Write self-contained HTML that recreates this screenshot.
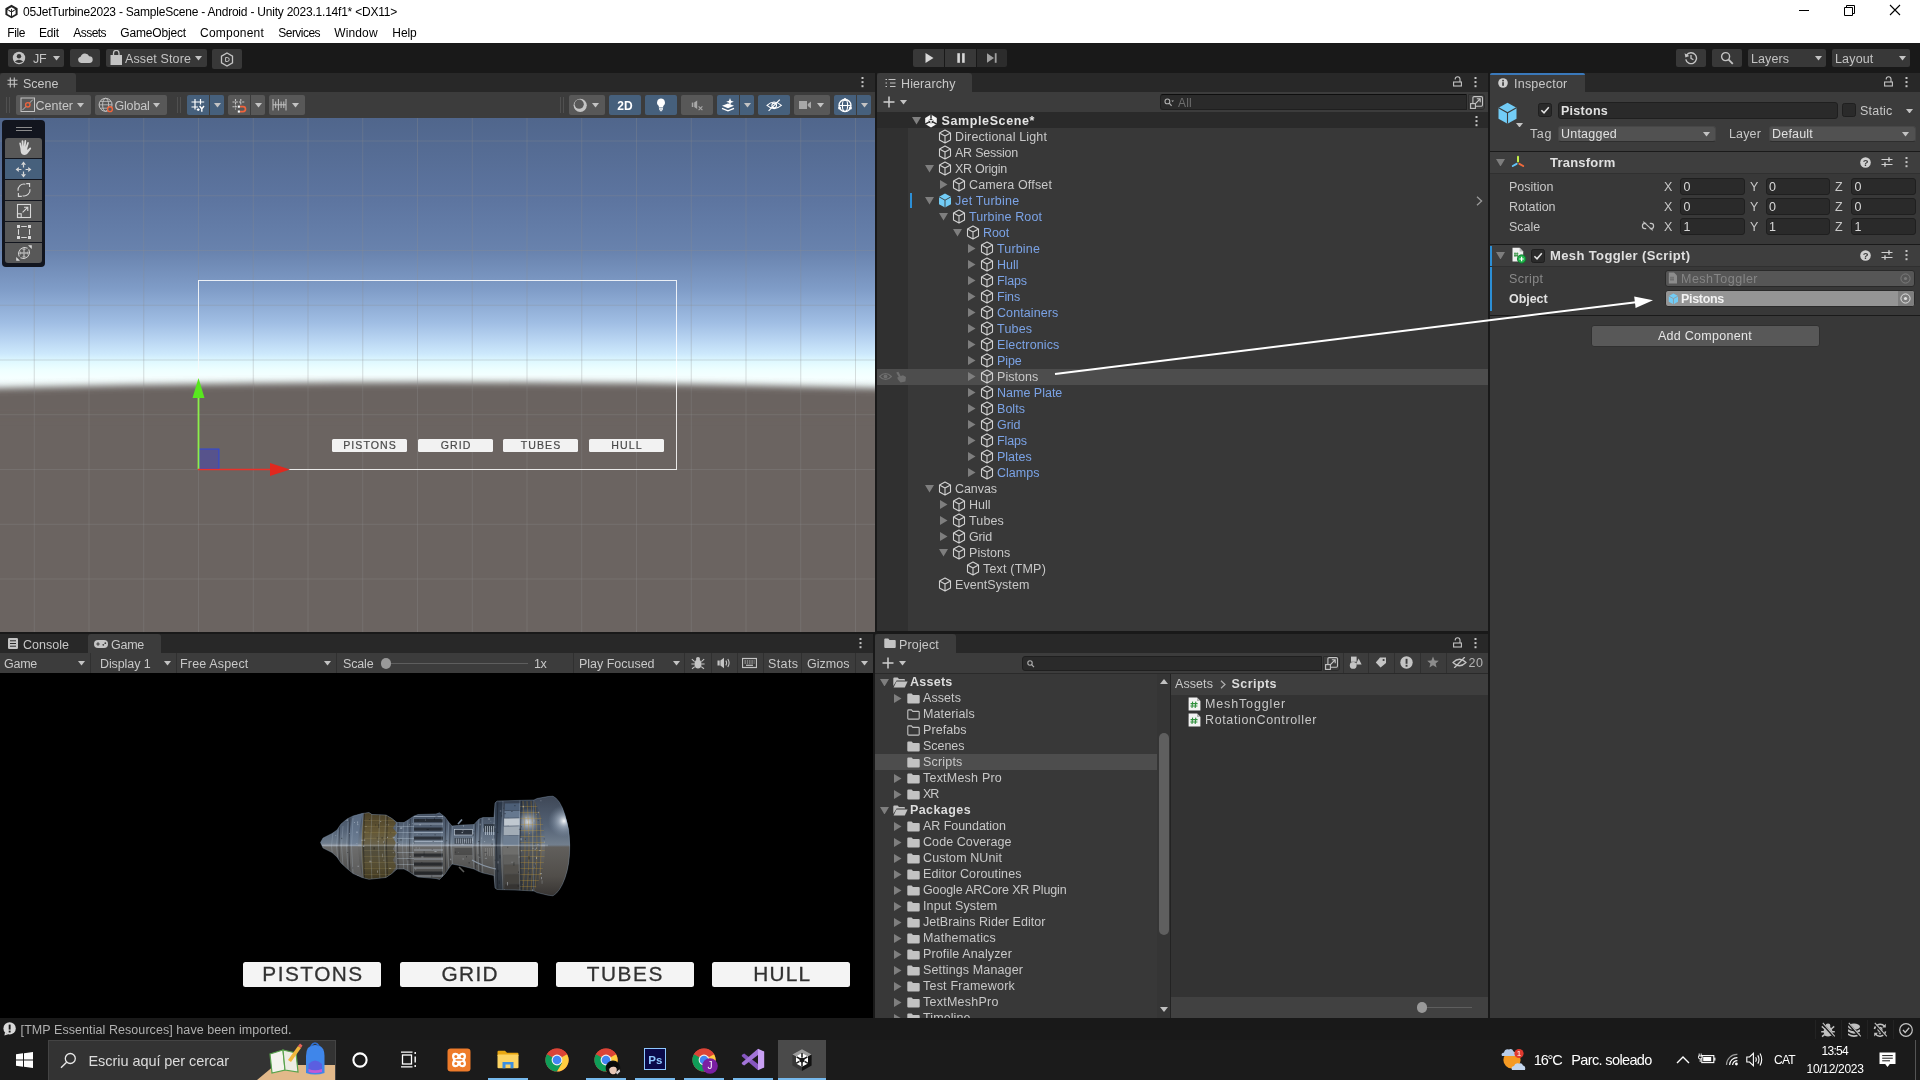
<!DOCTYPE html>
<html><head><meta charset="utf-8"><title>Unity Editor</title>
<style>
html,body{margin:0;padding:0;width:1920px;height:1080px;overflow:hidden;background:#383838;}
body{font-family:"Liberation Sans",sans-serif;position:relative;}
.r{position:absolute;display:block;box-sizing:border-box;}
.t{position:absolute;white-space:nowrap;line-height:16px;height:16px;}
</style></head><body>
<div id="root" style="position:absolute;left:0;top:0;width:1920px;height:1080px;will-change:transform;">

<div class="r" style="left:0px;top:0px;width:1920px;height:43px;background:#ffffff;"></div>
<svg class="r" style="left:4px;top:4px;" width="15" height="15" viewBox="0 0 15 15"><path d="M7.5 0.8 L13.6 4.2 V10.8 L7.5 14.2 L1.4 10.8 V4.2 Z" fill="#222"/><path d="M7.5 3.2 L11.2 5.3 L7.5 7.4 L3.8 5.3 Z M3.4 6 L7 8.1 V12 L3.4 10 Z M11.6 6 L8 8.1 V12 L11.6 10 Z" fill="#fff"/><path d="M7.5 5 V9.5 M5 6.5 L7.5 8 L10 6.5" stroke="#222" stroke-width="0.9" fill="none"/></svg>
<div class="t" style="left:23.00px;top:4.20px;font-size:12px;color:#000;letter-spacing:-0.219px;">05JetTurbine2023 - SampleScene - Android - Unity 2023.1.14f1* &lt;DX11&gt;</div>
<div class="t" style="left:7.30px;top:24.90px;font-size:12px;color:#000;letter-spacing:-0.409px;">File</div>
<div class="t" style="left:39.00px;top:24.90px;font-size:12px;color:#000;letter-spacing:-0.169px;">Edit</div>
<div class="t" style="left:73.30px;top:24.90px;font-size:12px;color:#000;letter-spacing:-0.552px;">Assets</div>
<div class="t" style="left:120.30px;top:24.90px;font-size:12px;color:#000;letter-spacing:-0.166px;">GameObject</div>
<div class="t" style="left:200.00px;top:24.90px;font-size:12px;color:#000;letter-spacing:0.218px;">Component</div>
<div class="t" style="left:278.30px;top:24.90px;font-size:12px;color:#000;letter-spacing:-0.539px;">Services</div>
<div class="t" style="left:334.30px;top:24.90px;font-size:12px;color:#000;letter-spacing:0.120px;">Window</div>
<div class="t" style="left:392.30px;top:24.90px;font-size:12px;color:#000;letter-spacing:-0.070px;">Help</div>
<svg class="r" style="left:1797px;top:4px;" width="110" height="14" viewBox="0 0 110 14"><path d="M2 6.5 H12" stroke="#000" stroke-width="1"/><path d="M47.5 3.5 H55.5 V11.5 H47.5 Z M49.5 3.5 V1.5 H57.5 V9.5 H55.5" stroke="#000" stroke-width="1" fill="none"/><path d="M93 1 L103 11 M103 1 L93 11" stroke="#000" stroke-width="1.1"/></svg>
<div class="r" style="left:0px;top:43px;width:1920px;height:30px;background:#191919;"></div>
<div class="r" style="left:8px;top:49px;width:56px;height:18px;background:#383838;border-radius:2px;"></div>
<div class="r" style="left:70px;top:49px;width:30px;height:18px;background:#383838;border-radius:2px;"></div>
<div class="r" style="left:106px;top:49px;width:101px;height:18px;background:#383838;border-radius:2px;"></div>
<div class="r" style="left:212px;top:49px;width:30px;height:20px;background:#383838;border-radius:2px;"></div>
<svg class="r" style="left:12px;top:51px;" width="14" height="14" viewBox="0 0 14 14"><circle cx="7" cy="7" r="6.2" fill="#c4c4c4"/><circle cx="7" cy="5.3" r="2.2" fill="#383838"/><path d="M2.8 10.6 Q7 6.8 11.2 10.6 Q7 13.5 2.8 10.6Z" fill="#383838"/></svg>
<div class="t" style="left:33.00px;top:50.70px;font-size:12.5px;color:#c4c4c4;letter-spacing:-0.192px;">JF</div>
<svg class="r" style="left:53px;top:56px;" width="7" height="4.5" viewBox="0 0 7 4.5"><path d="M0 0 H7 L3.5 4.5 Z" fill="#c4c4c4"/></svg>
<svg class="r" style="left:77px;top:52px;" width="16" height="12" viewBox="0 0 16 12"><path d="M4 11 A3.2 3.2 0 0 1 3.6 4.7 A4.6 4.6 0 0 1 12.2 4.2 A3.4 3.4 0 0 1 12.4 11 Z" fill="#c4c4c4"/></svg>
<svg class="r" style="left:110px;top:50px;" width="13" height="16" viewBox="0 0 13 16"><rect x="0.5" y="5" width="11.5" height="10" fill="#c4c4c4"/><path d="M3.5 5 V3.2 A2.7 2.7 0 0 1 9 3.2 V5" fill="none" stroke="#c4c4c4" stroke-width="1.3"/></svg>
<div class="t" style="left:125.00px;top:50.70px;font-size:12.5px;color:#c4c4c4;letter-spacing:0.126px;">Asset Store</div>
<svg class="r" style="left:194.5px;top:56px;" width="7" height="4.5" viewBox="0 0 7 4.5"><path d="M0 0 H7 L3.5 4.5 Z" fill="#c4c4c4"/></svg>
<svg class="r" style="left:220px;top:52px;" width="14" height="15" viewBox="0 0 14 15"><path d="M7 1 L12.5 4.2 V10.8 L7 14 L1.5 10.8 V4.2 Z" fill="none" stroke="#c4c4c4" stroke-width="1.3"/><path d="M5.6 5.5 H7.2 A2 2 0 0 1 7.2 9.5 H5.6 Z" fill="none" stroke="#c4c4c4" stroke-width="1"/></svg>
<div class="r" style="left:913px;top:49px;width:30.5px;height:18px;background:#383838;border-radius:2px 0 0 2px;"></div>
<div class="r" style="left:945px;top:49px;width:30.5px;height:18px;background:#383838;"></div>
<div class="r" style="left:977px;top:49px;width:29.5px;height:18px;background:#2c2c2c;border-radius:0 2px 2px 0;"></div>
<svg class="r" style="left:923px;top:52px;" width="12" height="12" viewBox="0 0 12 12"><path d="M2.5 1 L10.5 6 L2.5 11 Z" fill="#d8d8d8"/></svg>
<svg class="r" style="left:955px;top:52px;" width="12" height="12" viewBox="0 0 12 12"><rect x="2.3" y="1.2" width="2.6" height="9.6" fill="#d8d8d8"/><rect x="7.1" y="1.2" width="2.6" height="9.6" fill="#d8d8d8"/></svg>
<svg class="r" style="left:986px;top:52px;" width="12" height="12" viewBox="0 0 12 12"><path d="M1 1.2 L8 6 L1 10.8 Z" fill="#a0a0a0"/><rect x="8.8" y="1.2" width="1.8" height="9.6" fill="#a0a0a0"/></svg>
<div class="r" style="left:1676px;top:49px;width:29.5px;height:18px;background:#383838;border-radius:2px;"></div>
<div class="r" style="left:1712px;top:49px;width:29.5px;height:18px;background:#383838;border-radius:2px;"></div>
<div class="r" style="left:1748px;top:49px;width:77.5px;height:18px;background:#383838;border-radius:2px;"></div>
<div class="r" style="left:1832px;top:49px;width:77.5px;height:18px;background:#383838;border-radius:2px;"></div>
<svg class="r" style="left:1684px;top:51px;" width="14" height="14" viewBox="0 0 14 14"><path d="M2.6 4.2 A5.4 5.4 0 1 1 1.8 8.3" fill="none" stroke="#c4c4c4" stroke-width="1.4"/><path d="M0.6 2.2 L1.4 6.4 L5.4 5 Z" fill="#c4c4c4"/><path d="M7 4 V7.4 L9.4 8.8" fill="none" stroke="#c4c4c4" stroke-width="1.3"/></svg>
<svg class="r" style="left:1720px;top:51px;" width="14" height="14" viewBox="0 0 14 14"><circle cx="5.6" cy="5.6" r="4" fill="none" stroke="#c4c4c4" stroke-width="1.4"/><path d="M8.6 8.6 L12.8 12.8" stroke="#c4c4c4" stroke-width="1.8"/></svg>
<div class="t" style="left:1751.00px;top:50.70px;font-size:12.5px;color:#c4c4c4;letter-spacing:0.081px;">Layers</div>
<svg class="r" style="left:1815px;top:56px;" width="7" height="4.5" viewBox="0 0 7 4.5"><path d="M0 0 H7 L3.5 4.5 Z" fill="#c4c4c4"/></svg>
<div class="t" style="left:1835.00px;top:50.70px;font-size:12.5px;color:#c4c4c4;letter-spacing:0.162px;">Layout</div>
<svg class="r" style="left:1899px;top:56px;" width="7" height="4.5" viewBox="0 0 7 4.5"><path d="M0 0 H7 L3.5 4.5 Z" fill="#c4c4c4"/></svg>
<div class="r" style="left:0px;top:73px;width:1920px;height:945px;background:#191919;"></div>
<div class="r" style="left:0px;top:73px;width:875px;height:19px;background:#282828;"></div>
<div class="r" style="left:0px;top:73px;width:76px;height:19px;background:#3c3c3c;border-radius:3px 3px 0 0;"></div>
<svg class="r" style="left:7px;top:77px;" width="11" height="11" viewBox="0 0 11 11"><path d="M3.3 0.5 V10.5 M7.3 0.5 V10.5 M0.5 3.3 H10.5 M0.5 7.3 H10.5" stroke="#c4c4c4" stroke-width="1.1" fill="none"/></svg>
<div class="t" style="left:23.00px;top:75.70px;font-size:12.5px;color:#c8c8c8;letter-spacing:0.012px;">Scene</div>
<svg class="r" style="left:860.5px;top:76.8px;" width="3" height="11" viewBox="0 0 3 11"><rect x="0.5" y="0" width="2" height="2" fill="#c4c4c4"/><rect x="0.5" y="4.1" width="2" height="2" fill="#c4c4c4"/><rect x="0.5" y="8.2" width="2" height="2" fill="#c4c4c4"/></svg>
<div class="r" style="left:0px;top:92px;width:875px;height:26px;background:#3c3c3c;"></div>
<div class="r" style="left:6px;top:97px;width:1px;height:16px;background:#505050;"></div>
<div class="r" style="left:9px;top:97px;width:1px;height:16px;background:#505050;"></div>
<div class="r" style="left:177px;top:97px;width:1px;height:16px;background:#505050;"></div>
<div class="r" style="left:180px;top:97px;width:1px;height:16px;background:#505050;"></div>
<div class="r" style="left:559.5px;top:97px;width:1px;height:16px;background:#505050;"></div>
<div class="r" style="left:562.5px;top:97px;width:1px;height:16px;background:#505050;"></div>
<div class="r" style="left:16px;top:95px;width:75px;height:20px;background:#585858;border-radius:2px;"></div>
<div class="r" style="left:95px;top:95px;width:72px;height:20px;background:#585858;border-radius:2px;"></div>
<svg class="r" style="left:19.5px;top:97px;" width="16" height="16" viewBox="0 0 16 16"><rect x="1" y="1" width="13.5" height="13.5" fill="none" stroke="#c4c4c4" stroke-width="1"/><path d="M2.5 13 L13 2.5" stroke="#c4c4c4" stroke-width="0.9"/><circle cx="7.8" cy="7.8" r="2.2" fill="#585858" stroke="#f0643c" stroke-width="1.3"/></svg>
<div class="t" style="left:35.50px;top:97.70px;font-size:12.5px;color:#c8c8c8;letter-spacing:-0.003px;">Center</div>
<svg class="r" style="left:77px;top:103px;" width="7" height="4.5" viewBox="0 0 7 4.5"><path d="M0 0 H7 L3.5 4.5 Z" fill="#c4c4c4"/></svg>
<svg class="r" style="left:98px;top:97px;" width="16" height="16" viewBox="0 0 16 16"><circle cx="7.6" cy="7.8" r="6.5" fill="none" stroke="#c4c4c4" stroke-width="1"/><ellipse cx="7.6" cy="7.8" rx="3" ry="6.5" fill="none" stroke="#c4c4c4" stroke-width="0.9"/><path d="M1.1 7.8 H14.1 M2.2 4.4 H13 M2.2 11.2 H13" stroke="#c4c4c4" stroke-width="0.8"/><circle cx="12" cy="12.2" r="2.4" fill="#585858" stroke="#f0643c" stroke-width="1.4"/></svg>
<div class="t" style="left:114.50px;top:97.70px;font-size:12.5px;color:#c8c8c8;letter-spacing:-0.188px;">Global</div>
<svg class="r" style="left:153px;top:103px;" width="7" height="4.5" viewBox="0 0 7 4.5"><path d="M0 0 H7 L3.5 4.5 Z" fill="#c4c4c4"/></svg>
<div class="r" style="left:187px;top:95px;width:22px;height:20px;background:#46607c;border-radius:2px 0 0 2px;"></div>
<div class="r" style="left:210px;top:95px;width:14px;height:20px;background:#46607c;border-radius:0 2px 2px 0;"></div>
<svg class="r" style="left:191px;top:98px;" width="14" height="15" viewBox="0 0 14 15"><path d="M4 1 V11.5 M9.5 1 V6.5 M0.5 4 H13.2 M0.5 9 H7 M5.8 11.6 H8.6 M7.2 10.2 V13" stroke="#fff" stroke-width="1.2" fill="none"/><path d="M8.6 8 L10.8 10.8 L13 8 M10.8 10.8 V13.8" stroke="#fff" stroke-width="1.4" fill="none"/></svg>
<svg class="r" style="left:213.5px;top:103px;" width="7" height="4.5" viewBox="0 0 7 4.5"><path d="M0 0 H7 L3.5 4.5 Z" fill="#c4c4c4"/></svg>
<div class="r" style="left:228px;top:95px;width:22px;height:20px;background:#585858;border-radius:2px 0 0 2px;"></div>
<div class="r" style="left:251px;top:95px;width:14px;height:20px;background:#585858;border-radius:0 2px 2px 0;"></div>
<svg class="r" style="left:232px;top:98px;" width="15" height="15" viewBox="0 0 15 15"><path d="M3.5 1 V11.5 M8.8 1 V6.5 M0.5 4 H12.5 M0.5 8.7 H5" stroke="#c4c4c4" stroke-width="1.1" fill="none" stroke-dasharray="2.2 1"/><path d="M8 8.6 H11 A2.5 2.5 0 0 1 11 13.6 H8" stroke="#f0643c" stroke-width="1.7" fill="none"/><rect x="5.8" y="7.6" width="2.1" height="2.1" fill="#fff"/><rect x="5.8" y="12.5" width="2.1" height="2.1" fill="#fff"/></svg>
<svg class="r" style="left:254.5px;top:103px;" width="7" height="4.5" viewBox="0 0 7 4.5"><path d="M0 0 H7 L3.5 4.5 Z" fill="#c4c4c4"/></svg>
<div class="r" style="left:269px;top:95px;width:36px;height:20px;background:#585858;border-radius:2px;"></div>
<svg class="r" style="left:272px;top:98px;" width="15" height="14" viewBox="0 0 15 14"><path d="M1 1 V12.5 M3.7 3.5 V10 M6.4 1 V12.5 M9.1 3.5 V10 M11.8 3.5 V10 M14 1 V12.5 M1 6.8 H14" stroke="#c4c4c4" stroke-width="1" fill="none"/></svg>
<svg class="r" style="left:291.5px;top:103px;" width="7" height="4.5" viewBox="0 0 7 4.5"><path d="M0 0 H7 L3.5 4.5 Z" fill="#c4c4c4"/></svg>
<div class="r" style="left:569px;top:95px;width:36px;height:20px;background:#585858;border-radius:2px;"></div>
<svg class="r" style="left:573px;top:98px;" width="15" height="15" viewBox="0 0 15 15"><circle cx="7.2" cy="7.3" r="6.6" fill="#c4c4c4"/><circle cx="6.2" cy="6.2" r="4.6" fill="#585858"/></svg>
<svg class="r" style="left:591.5px;top:103px;" width="7" height="4.5" viewBox="0 0 7 4.5"><path d="M0 0 H7 L3.5 4.5 Z" fill="#c4c4c4"/></svg>
<div class="r" style="left:609px;top:95px;width:32px;height:20px;background:#46607c;border-radius:2px;"></div>
<div class="t" style="left:475.00px;width:300px;text-align:center;top:97.70px;font-size:12px;color:#fff;letter-spacing:0.000px;font-weight:bold;">2D</div>
<div class="r" style="left:645px;top:95px;width:32px;height:20px;background:#46607c;border-radius:2px;"></div>
<svg class="r" style="left:655px;top:97px;" width="12" height="16" viewBox="0 0 12 16"><path d="M6 1.6 A4 4 0 0 1 8.2 8.9 V10.4 H3.8 V8.9 A4 4 0 0 1 6 1.6 Z" fill="#fff"/><rect x="4" y="11.2" width="4" height="1.5" fill="#fff"/><rect x="4.8" y="13.2" width="2.4" height="1" fill="#fff"/></svg>
<div class="r" style="left:681px;top:95px;width:32px;height:20px;background:#585858;border-radius:2px;"></div>
<svg class="r" style="left:690px;top:99px;" width="15" height="13" viewBox="0 0 15 13"><rect x="1.8" y="3.6" width="1.5" height="4.4" fill="#a8a8a8"/><path d="M4.2 3.6 L7.2 1.6 V10 L4.2 8 Z" fill="#a8a8a8"/><path d="M8.6 7.4 L12.4 11.2 M12.4 7.4 L8.6 11.2" stroke="#a8a8a8" stroke-width="1.1"/></svg>
<div class="r" style="left:717px;top:95px;width:22px;height:20px;background:#46607c;border-radius:2px 0 0 2px;"></div>
<div class="r" style="left:740px;top:95px;width:14px;height:20px;background:#46607c;border-radius:0 2px 2px 0;"></div>
<svg class="r" style="left:720px;top:97px;" width="16" height="16" viewBox="0 0 16 16"><path d="M2 8.8 L8 6.4 L14 8.8 L8 11.2 Z" fill="#fff"/><path d="M2 11.4 L8 13.8 L14 11.4" fill="none" stroke="#fff" stroke-width="1.4"/><path d="M10 1 L11 3.8 L13.8 4.8 L11 5.8 L10 8.6 L9 5.8 L6.2 4.8 L9 3.8 Z" fill="#fff"/></svg>
<svg class="r" style="left:743.5px;top:103px;" width="7" height="4.5" viewBox="0 0 7 4.5"><path d="M0 0 H7 L3.5 4.5 Z" fill="#c4c4c4"/></svg>
<div class="r" style="left:758px;top:95px;width:32px;height:20px;background:#46607c;border-radius:2px;"></div>
<svg class="r" style="left:765px;top:98px;" width="18" height="14" viewBox="0 0 18 14"><path d="M2 7.4 Q9 0.6 16.4 7.4 Q9 13.8 2 7.4 Z" fill="none" stroke="#fff" stroke-width="1.1"/><circle cx="9.2" cy="7.4" r="2.3" fill="none" stroke="#fff" stroke-width="1.1"/><path d="M3.6 12.8 L14.8 1.6" stroke="#fff" stroke-width="1.2"/></svg>
<div class="r" style="left:794px;top:95px;width:36px;height:20px;background:#585858;border-radius:2px;"></div>
<svg class="r" style="left:799px;top:100px;" width="13" height="10" viewBox="0 0 13 10"><rect x="0" y="1" width="8" height="8" fill="#a8a8a8"/><path d="M8.8 4 L12 1.5 V8.5 L8.8 6 Z" fill="#a8a8a8"/></svg>
<svg class="r" style="left:816.5px;top:103px;" width="7" height="4.5" viewBox="0 0 7 4.5"><path d="M0 0 H7 L3.5 4.5 Z" fill="#c4c4c4"/></svg>
<div class="r" style="left:834px;top:95px;width:22px;height:20px;background:#46607c;border-radius:2px 0 0 2px;"></div>
<div class="r" style="left:857px;top:95px;width:14px;height:20px;background:#46607c;border-radius:0 2px 2px 0;"></div>
<svg class="r" style="left:837px;top:97px;" width="16" height="16" viewBox="0 0 16 16"><circle cx="8" cy="8.5" r="6" fill="none" stroke="#fff" stroke-width="1.3"/><ellipse cx="8" cy="8.5" rx="2.6" ry="6" fill="none" stroke="#fff" stroke-width="1.1"/><path d="M2 8.5 H14" stroke="#fff" stroke-width="1.1"/><circle cx="8" cy="2.5" r="1.5" fill="#fff"/><circle cx="2.6" cy="11" r="1.5" fill="#fff"/><circle cx="13.4" cy="11" r="1.5" fill="#fff"/></svg>
<svg class="r" style="left:860.5px;top:103px;" width="7" height="4.5" viewBox="0 0 7 4.5"><path d="M0 0 H7 L3.5 4.5 Z" fill="#c4c4c4"/></svg>
<svg class="r" style="left:0;top:118px" width="875" height="514" viewBox="0 0 875 514">
<defs><linearGradient id="sky" x1="0" y1="0" x2="0" y2="1">
<stop offset="0.0000" stop-color="#50668c"/>
<stop offset="0.2929" stop-color="#5d75a0"/>
<stop offset="0.4714" stop-color="#6882ad"/>
<stop offset="0.6143" stop-color="#809dc8"/>
<stop offset="0.7321" stop-color="#a0bee4"/>
<stop offset="0.7929" stop-color="#b9d5f2"/>
<stop offset="0.8429" stop-color="#cde9fc"/>
<stop offset="0.8679" stop-color="#def8ff"/>
<stop offset="0.9000" stop-color="#eeffff"/>
<stop offset="0.9250" stop-color="#f5ffff"/>
<stop offset="1.0000" stop-color="#f0fafa"/>
</linearGradient>
<filter id="bl" x="-5%" y="-20%" width="110%" height="140%"><feGaussianBlur stdDeviation="3.8"/></filter></defs>
<rect x="0" y="0" width="875" height="280" fill="url(#sky)"/>
<rect x="0" y="280" width="875" height="234" fill="#6b6461"/>
<path d="M-20 270.5 Q437 258 895 270.5 V300 H-20 Z" fill="#6b6461" filter="url(#bl)"/>
<rect x="33.75" y="0" width="1" height="514" fill="#909090" fill-opacity="0.3"/><rect x="88.50" y="0" width="1" height="514" fill="#909090" fill-opacity="0.3"/><rect x="143.25" y="0" width="1" height="514" fill="#909090" fill-opacity="0.3"/><rect x="198.00" y="0" width="1" height="514" fill="#909090" fill-opacity="0.3"/><rect x="252.75" y="0" width="1" height="514" fill="#909090" fill-opacity="0.3"/><rect x="307.50" y="0" width="1" height="514" fill="#909090" fill-opacity="0.3"/><rect x="362.25" y="0" width="1" height="514" fill="#909090" fill-opacity="0.3"/><rect x="417.00" y="0" width="1" height="514" fill="#909090" fill-opacity="0.3"/><rect x="471.75" y="0" width="1" height="514" fill="#909090" fill-opacity="0.3"/><rect x="526.50" y="0" width="1" height="514" fill="#909090" fill-opacity="0.3"/><rect x="581.25" y="0" width="1" height="514" fill="#909090" fill-opacity="0.3"/><rect x="636.00" y="0" width="1" height="514" fill="#909090" fill-opacity="0.3"/><rect x="690.75" y="0" width="1" height="514" fill="#909090" fill-opacity="0.3"/><rect x="745.50" y="0" width="1" height="514" fill="#909090" fill-opacity="0.3"/><rect x="800.25" y="0" width="1" height="514" fill="#909090" fill-opacity="0.3"/><rect x="855.00" y="0" width="1" height="514" fill="#909090" fill-opacity="0.3"/><rect x="0" y="460.50" width="875" height="1" fill="#909090" fill-opacity="0.3"/><rect x="0" y="405.75" width="875" height="1" fill="#909090" fill-opacity="0.3"/><rect x="0" y="351.00" width="875" height="1" fill="#909090" fill-opacity="0.3"/><rect x="0" y="296.25" width="875" height="1" fill="#909090" fill-opacity="0.3"/><rect x="0" y="241.50" width="875" height="1" fill="#909090" fill-opacity="0.3"/><rect x="0" y="186.75" width="875" height="1" fill="#909090" fill-opacity="0.3"/><rect x="0" y="132.00" width="875" height="1" fill="#909090" fill-opacity="0.3"/><rect x="0" y="77.25" width="875" height="1" fill="#909090" fill-opacity="0.3"/><rect x="0" y="22.50" width="875" height="1" fill="#909090" fill-opacity="0.3"/>
<rect x="198.5" y="162.5" width="478" height="189" fill="none" stroke="#ffffff" stroke-opacity="0.85" stroke-width="1"/>
<rect x="199" y="331" width="20" height="20" fill="#3c3cc8" fill-opacity="0.42" stroke="#2846e6" stroke-width="0.9"/>
<path d="M198.5 351 V278" stroke="#8cf04a" stroke-width="1.8"/>
<path d="M198.5 260 L204.5 280 H192.5 Z" fill="#58e81e"/>
<path d="M198 351.5 H272" stroke="#e8322a" stroke-width="1.6"/>
<path d="M290 351.5 L270 345 V358 Z" fill="#e0281e"/>
</svg>
<div class="r" style="left:332px;top:439px;width:75px;height:13.2px;background:#f2f2f2;border-radius:1.5px;"></div>
<div class="t" style="left:220.00px;width:300px;text-align:center;top:436.90px;font-size:10.6px;color:#4a4a4a;letter-spacing:1.050px;-webkit-text-stroke:0.2px #4a4a4a;">PISTONS</div>
<div class="r" style="left:418px;top:439px;width:75px;height:13.2px;background:#f2f2f2;border-radius:1.5px;"></div>
<div class="t" style="left:306.00px;width:300px;text-align:center;top:436.90px;font-size:10.6px;color:#4a4a4a;letter-spacing:1.050px;-webkit-text-stroke:0.2px #4a4a4a;">GRID</div>
<div class="r" style="left:503px;top:439px;width:75px;height:13.2px;background:#f2f2f2;border-radius:1.5px;"></div>
<div class="t" style="left:391.00px;width:300px;text-align:center;top:436.90px;font-size:10.6px;color:#4a4a4a;letter-spacing:1.050px;-webkit-text-stroke:0.2px #4a4a4a;">TUBES</div>
<div class="r" style="left:589px;top:439px;width:75px;height:13.2px;background:#f2f2f2;border-radius:1.5px;"></div>
<div class="t" style="left:477.00px;width:300px;text-align:center;top:436.90px;font-size:10.6px;color:#4a4a4a;letter-spacing:1.050px;-webkit-text-stroke:0.2px #4a4a4a;">HULL</div>
<div class="r" style="left:2px;top:120px;width:43px;height:147px;background:#12151e;border-radius:4px;"></div>
<div class="r" style="left:16px;top:127px;width:16px;height:1px;background:#8c8c8c;"></div>
<div class="r" style="left:16px;top:130px;width:16px;height:1px;background:#8c8c8c;"></div>
<div class="r" style="left:5px;top:138px;width:37px;height:20px;background:#585858;border-radius:3px 3px 0 0;"></div>
<div class="r" style="left:5px;top:159px;width:37px;height:20px;background:#46607c;border-radius:0;"></div>
<div class="r" style="left:5px;top:180px;width:37px;height:20px;background:#585858;border-radius:0;"></div>
<div class="r" style="left:5px;top:201px;width:37px;height:20px;background:#585858;border-radius:0;"></div>
<div class="r" style="left:5px;top:222px;width:37px;height:20px;background:#585858;border-radius:0;"></div>
<div class="r" style="left:5px;top:243px;width:37px;height:20px;background:#585858;border-radius:0 0 3px 3px;"></div>
<svg class="r" style="left:16px;top:139px;" width="16" height="17" viewBox="0 0 16 17"><path d="M4.4 9.6 L3.3 4.6 Q3.2 3.6 4 3.5 Q4.8 3.4 5 4.4 L5.9 8 L5.6 2.2 Q5.6 1.2 6.5 1.2 Q7.3 1.2 7.4 2.2 L7.7 7.6 L8.5 1.9 Q8.7 0.9 9.5 1 Q10.3 1.2 10.2 2.2 L9.6 7.9 L11.2 3.6 Q11.6 2.7 12.3 3 Q13 3.3 12.8 4.3 L11.3 9.6 L11.4 11 L13.6 8.8 Q14.4 8.2 15 8.8 Q15.4 9.4 14.8 10.2 L11.6 14.6 Q10.6 16 8.6 16 Q5.4 16 4.8 13 Z" fill="#d8d8d8"/></svg>
<svg class="r" style="left:15px;top:161px;" width="17" height="17" viewBox="0 0 17 17"><path d="M8.5 3.6 V6.4 M8.5 10.6 V13.4 M3.6 8.5 H6.4 M10.6 8.5 H13.4" stroke="#d8d8d8" stroke-width="1.2"/><path d="M8.5 0.6 L11 3.8 H6 Z M8.5 16.4 L11 13.2 H6 Z M0.6 8.5 L3.8 6 V11 Z M16.4 8.5 L13.2 6 V11 Z" fill="#d8d8d8"/></svg>
<svg class="r" style="left:16px;top:182px;" width="16" height="16" viewBox="0 0 16 16"><path d="M2 8.8 A6 6 0 0 1 9.4 2.2 M14 7.2 A6 6 0 0 1 6.6 13.8" fill="none" stroke="#d8d8d8" stroke-width="1.1"/><path d="M10.2 1.6 H13.6 V5 M5.8 14.4 H2.4 V11" fill="none" stroke="#d8d8d8" stroke-width="1.1"/></svg>
<svg class="r" style="left:16px;top:203px;" width="16" height="16" viewBox="0 0 16 16"><rect x="1.5" y="1.5" width="13" height="13" fill="none" stroke="#d8d8d8" stroke-width="1.1"/><rect x="1.5" y="10.8" width="3.7" height="3.7" fill="none" stroke="#d8d8d8" stroke-width="1.1"/><path d="M6.6 9.4 L11.6 4.4 M8 4.2 H11.8 V8" fill="none" stroke="#d8d8d8" stroke-width="1.1"/></svg>
<svg class="r" style="left:16px;top:224px;" width="16" height="16" viewBox="0 0 16 16"><path d="M5.2 2.5 H10.8 M5.2 13.5 H10.8 M2.5 5.2 V10.8 M13.5 5.2 V10.8" stroke="#d8d8d8" stroke-width="1.1"/><rect x="1" y="1" width="3" height="3" fill="#d8d8d8"/><rect x="12" y="1" width="3" height="3" fill="#d8d8d8"/><rect x="1" y="12" width="3" height="3" fill="#d8d8d8"/><rect x="12" y="12" width="3" height="3" fill="#d8d8d8"/></svg>
<svg class="r" style="left:15px;top:244px;" width="18" height="18" viewBox="0 0 18 18"><path d="M4.2 12.6 A6.2 6.2 0 0 1 12.6 4.2 M13.8 5.4 A6.2 6.2 0 0 1 5.4 13.8" fill="none" stroke="#d8d8d8" stroke-width="1"/><path d="M9 5.8 V12.2 M5.8 9 H12.2" stroke="#b0b0b0" stroke-width="1.4"/><path d="M9 3.6 L10.8 6 H7.2 Z M9 14.4 L10.8 12 H7.2 Z M3.6 9 L6 7.2 V10.8 Z M14.4 9 L12 7.2 V10.8 Z" fill="#b0b0b0"/><path d="M13 1.2 H16.8 V5 Z M5 16.8 H1.2 V13 Z" fill="#d8d8d8"/></svg>
<div class="r" style="left:0px;top:634px;width:873px;height:19px;background:#282828;"></div>
<div class="r" style="left:88px;top:634px;width:73px;height:19px;background:#3c3c3c;border-radius:3px 3px 0 0;"></div>
<svg class="r" style="left:8px;top:638px;" width="10" height="11" viewBox="0 0 10 11"><rect x="0" y="0" width="10" height="11" rx="1.2" fill="#c4c4c4"/><path d="M2 2.8 H8 M2 5.5 H8 M2 8.2 H8" stroke="#282828" stroke-width="1"/></svg>
<div class="t" style="left:23.00px;top:636.70px;font-size:12.5px;color:#c8c8c8;letter-spacing:0.020px;">Console</div>
<svg class="r" style="left:94px;top:640px;" width="14" height="8" viewBox="0 0 14 8"><rect x="0" y="0" width="14" height="8" rx="4" fill="#c4c4c4"/><path d="M2.3 4 H5.7 M4 2.3 V5.7" stroke="#3c3c3c" stroke-width="1.1"/><circle cx="9.3" cy="4.8" r="0.9" fill="#3c3c3c"/><circle cx="11.3" cy="3.2" r="0.9" fill="#3c3c3c"/></svg>
<div class="t" style="left:111.00px;top:636.70px;font-size:12.5px;color:#c8c8c8;letter-spacing:-0.259px;">Game</div>
<svg class="r" style="left:858.5px;top:637.8px;" width="3" height="11" viewBox="0 0 3 11"><rect x="0.5" y="0" width="2" height="2" fill="#c4c4c4"/><rect x="0.5" y="4.1" width="2" height="2" fill="#c4c4c4"/><rect x="0.5" y="8.2" width="2" height="2" fill="#c4c4c4"/></svg>
<div class="r" style="left:0px;top:653px;width:873px;height:20px;background:#3c3c3c;"></div>
<div class="r" style="left:90px;top:653px;width:1px;height:20px;background:#303030;"></div>
<div class="r" style="left:176px;top:653px;width:1px;height:20px;background:#303030;"></div>
<div class="r" style="left:336px;top:653px;width:1px;height:20px;background:#303030;"></div>
<div class="r" style="left:573px;top:653px;width:1px;height:20px;background:#303030;"></div>
<div class="r" style="left:684px;top:653px;width:1px;height:20px;background:#303030;"></div>
<div class="r" style="left:711px;top:653px;width:1px;height:20px;background:#303030;"></div>
<div class="r" style="left:737px;top:653px;width:1px;height:20px;background:#303030;"></div>
<div class="r" style="left:763px;top:653px;width:1px;height:20px;background:#303030;"></div>
<div class="r" style="left:801px;top:653px;width:1px;height:20px;background:#303030;"></div>
<div class="t" style="left:4.00px;top:655.70px;font-size:12.5px;color:#c8c8c8;letter-spacing:-0.259px;">Game</div>
<svg class="r" style="left:78px;top:661px;" width="7" height="4.5" viewBox="0 0 7 4.5"><path d="M0 0 H7 L3.5 4.5 Z" fill="#c4c4c4"/></svg>
<div class="t" style="left:100.00px;top:655.70px;font-size:12.5px;color:#c8c8c8;letter-spacing:-0.101px;">Display 1</div>
<svg class="r" style="left:164px;top:661px;" width="7" height="4.5" viewBox="0 0 7 4.5"><path d="M0 0 H7 L3.5 4.5 Z" fill="#c4c4c4"/></svg>
<div class="t" style="left:180.00px;top:655.70px;font-size:12.5px;color:#c8c8c8;letter-spacing:0.164px;">Free Aspect</div>
<svg class="r" style="left:324px;top:661px;" width="7" height="4.5" viewBox="0 0 7 4.5"><path d="M0 0 H7 L3.5 4.5 Z" fill="#c4c4c4"/></svg>
<div class="t" style="left:343.00px;top:656.20px;font-size:12.5px;color:#c8c8c8;letter-spacing:-0.154px;">Scale</div>
<div class="r" style="left:386px;top:662.5px;width:142px;height:1.5px;background:#5e5e5e;"></div>
<div class="r" style="left:380.5px;top:658px;width:10.5px;height:10.5px;background:#999;border-radius:50%;"></div>
<div class="t" style="left:534.00px;top:656.20px;font-size:12.5px;color:#c8c8c8;letter-spacing:-0.351px;">1x</div>
<div class="t" style="left:579.00px;top:655.70px;font-size:12.5px;color:#c8c8c8;letter-spacing:-0.019px;">Play Focused</div>
<svg class="r" style="left:673px;top:661px;" width="7" height="4.5" viewBox="0 0 7 4.5"><path d="M0 0 H7 L3.5 4.5 Z" fill="#c4c4c4"/></svg>
<svg class="r" style="left:691px;top:656px;" width="14" height="14" viewBox="0 0 14 14"><ellipse cx="7" cy="8" rx="3.6" ry="4.6" fill="#c4c4c4"/><circle cx="7" cy="3" r="2" fill="#c4c4c4"/><path d="M0.8 3.2 L3.6 5.6 M13.2 3.2 L10.4 5.6 M0.4 8 H3.4 M13.6 8 H10.6 M1 12.8 L3.8 10.6 M13 12.8 L10.2 10.6" stroke="#c4c4c4" stroke-width="1.1"/></svg>
<svg class="r" style="left:717px;top:657px;" width="14" height="12" viewBox="0 0 14 12"><rect x="0.5" y="3.5" width="2.2" height="5" fill="#c4c4c4"/><path d="M3.4 3.5 L7 0.8 V11.2 L3.4 8.5 Z" fill="#c4c4c4"/><path d="M8.8 3.6 Q10.4 6 8.8 8.4 M10.8 2 Q13.4 6 10.8 10" fill="none" stroke="#c4c4c4" stroke-width="1.1"/></svg>
<svg class="r" style="left:742px;top:657px;" width="15" height="12" viewBox="0 0 15 12"><rect x="0.5" y="1.5" width="14" height="9" fill="none" stroke="#c4c4c4" stroke-width="1.2"/><path d="M2.5 4 H12.5 M2.5 6 H12.5" stroke="#c4c4c4" stroke-width="1.2" stroke-dasharray="1.4 0.9"/><path d="M4 8.3 H11" stroke="#c4c4c4" stroke-width="1.2"/></svg>
<div class="t" style="left:768.00px;top:655.70px;font-size:12.5px;color:#c8c8c8;letter-spacing:0.403px;">Stats</div>
<div class="t" style="left:807.00px;top:655.70px;font-size:12.5px;color:#c8c8c8;letter-spacing:0.023px;">Gizmos</div>
<div class="r" style="left:855px;top:653px;width:1px;height:20px;background:#303030;"></div>
<svg class="r" style="left:860.5px;top:661px;" width="7" height="4.5" viewBox="0 0 7 4.5"><path d="M0 0 H7 L3.5 4.5 Z" fill="#c4c4c4"/></svg>
<div class="r" style="left:0px;top:673px;width:873px;height:345px;background:#000000;"></div>
<svg class="r" style="left:310px;top:785px" width="270" height="120" viewBox="310 785 270 120">
<defs>
<linearGradient id="tg" gradientUnits="userSpaceOnUse" x1="0" y1="796" x2="0" y2="896">
<stop offset="0" stop-color="#2e3644"/><stop offset="0.15" stop-color="#414d5f"/><stop offset="0.35" stop-color="#576578"/><stop offset="0.47" stop-color="#6e7c8c"/><stop offset="0.495" stop-color="#8b939c"/><stop offset="0.51" stop-color="#6a6a69"/><stop offset="0.7" stop-color="#555554"/><stop offset="0.88" stop-color="#40403f"/><stop offset="1" stop-color="#2c2c2b"/>
</linearGradient>
<linearGradient id="gold" gradientUnits="userSpaceOnUse" x1="0" y1="812" x2="0" y2="880">
<stop offset="0" stop-color="#493c1d"/><stop offset="0.3" stop-color="#67562b"/><stop offset="0.49" stop-color="#665c40"/><stop offset="0.51" stop-color="#4c4837"/><stop offset="0.8" stop-color="#564c2c"/><stop offset="1" stop-color="#3c3318"/>
</linearGradient>
<linearGradient id="flg" gradientUnits="userSpaceOnUse" x1="0" y1="796" x2="0" y2="896">
<stop offset="0" stop-color="#3e4756"/><stop offset="0.3" stop-color="#546275"/><stop offset="0.49" stop-color="#727f8e"/><stop offset="0.51" stop-color="#615f5c"/><stop offset="0.8" stop-color="#514e4a"/><stop offset="1" stop-color="#373432"/>
</linearGradient>
<radialGradient id="hl" gradientUnits="userSpaceOnUse" cx="564" cy="821" r="16"><stop offset="0" stop-color="#ffffff" stop-opacity="0.95"/><stop offset="0.35" stop-color="#c8d4e2" stop-opacity="0.55"/><stop offset="1" stop-color="#8193a8" stop-opacity="0"/></radialGradient>
<radialGradient id="hl2" gradientUnits="userSpaceOnUse" cx="528" cy="822" r="14"><stop offset="0" stop-color="#f4f6f8" stop-opacity="0.85"/><stop offset="1" stop-color="#8193a8" stop-opacity="0"/></radialGradient>
<clipPath id="tc"><path d="M320.5 842.5 L323 838 L332 833.5 L337 830 L341 824 L347 819 L353 816 L362 813.5 L369 812.6 L372 814.5 L386 815 L392 818.5 L397 822.5 L404 822.5 L408 820 L414 816 L418 814.5 L436 814 L439.5 812.8 L445 817 L449 822.5 L452 826 L462 825 L474 824.5 L479 819 L483 817.5 L494 817.5 L495 803 L497 801 L515 800.5 L534 800 L537 798.5 L548 796.5 L553 796.2 Q560 799 565 815 Q570 830 569.7 845 Q570 864 565 878 Q560 892 553 895.8 L548 895.2 L537 892.6 L534 891 L515 890 L497 889.5 L495 888 L494 875.5 L483 873 L479 871.5 L474 869 L462 866 L452 864 L449 868 L445 874 L439.5 879.5 L436 878.5 L418 877 L414 875 L408 871 L404 869 L397 869 L392 873.5 L386 877.5 L372 879 L369 879.3 L362 877.5 L353 873.5 L347 868.5 L341 863 L337 857 L332 852.5 L323 848 Z"/></clipPath>
</defs>
<path d="M320.5 842.5 L323 838 L332 833.5 L337 830 L341 824 L347 819 L353 816 L362 813.5 L369 812.6 L372 814.5 L386 815 L392 818.5 L397 822.5 L404 822.5 L408 820 L414 816 L418 814.5 L436 814 L439.5 812.8 L445 817 L449 822.5 L452 826 L462 825 L474 824.5 L479 819 L483 817.5 L494 817.5 L495 803 L497 801 L515 800.5 L534 800 L537 798.5 L548 796.5 L553 796.2 Q560 799 565 815 Q570 830 569.7 845 Q570 864 565 878 Q560 892 553 895.8 L548 895.2 L537 892.6 L534 891 L515 890 L497 889.5 L495 888 L494 875.5 L483 873 L479 871.5 L474 869 L462 866 L452 864 L449 868 L445 874 L439.5 879.5 L436 878.5 L418 877 L414 875 L408 871 L404 869 L397 869 L392 873.5 L386 877.5 L372 879 L369 879.3 L362 877.5 L353 873.5 L347 868.5 L341 863 L337 857 L332 852.5 L323 848 Z" fill="url(#tg)"/>
<g clip-path="url(#tc)">
<path d="M365 812 L386 814 L392 818 L396 823 L393 828 L397 833 L393 838 L396 843 L393 849 L396 854 L393 860 L396 866 L392 873 L386 878 L364 880 Q359 846 364 812 Z" fill="url(#gold)" fill-opacity="0.85"/>
<path d="M353 814 L363 812 Q358.5 830 358 846 L348.5 846 Q349 830 353 814 Z" fill="#6d829c" fill-opacity="0.5"/>
<path d="M348.5 846 L358 846 Q358.5 862 363 880 L353 876 Q349 862 348.5 846 Z" fill="#707070" fill-opacity="0.45"/>
<rect x="414" y="819" width="29" height="3.2" fill="#15181c" fill-opacity="0.7"/>
<rect x="414" y="827.5" width="29" height="3.2" fill="#15181c" fill-opacity="0.7"/>
<rect x="414" y="836.5" width="29" height="3.2" fill="#15181c" fill-opacity="0.7"/>
<rect x="414" y="853.5" width="29" height="3.2" fill="#15181c" fill-opacity="0.7"/>
<rect x="414" y="862.5" width="29" height="3.2" fill="#15181c" fill-opacity="0.7"/>
<rect x="414" y="871.5" width="29" height="3.2" fill="#15181c" fill-opacity="0.7"/>
<rect x="414" y="816" width="29" height="1" fill="#c4d2e0" fill-opacity="0.55"/>
<rect x="414" y="823.5" width="29" height="1" fill="#c4d2e0" fill-opacity="0.55"/>
<rect x="414" y="832" width="29" height="1" fill="#c4d2e0" fill-opacity="0.55"/>
<rect x="414" y="841" width="29" height="1" fill="#c4d2e0" fill-opacity="0.55"/>
<rect x="414" y="849.5" width="29" height="1" fill="#c4d2e0" fill-opacity="0.55"/>
<rect x="414" y="858.5" width="29" height="1" fill="#c4d2e0" fill-opacity="0.55"/>
<rect x="414" y="867.5" width="29" height="1" fill="#c4d2e0" fill-opacity="0.55"/>
<rect x="414" y="875.5" width="29" height="1" fill="#c4d2e0" fill-opacity="0.55"/>
<rect x="454.5" y="829.5" width="18" height="5.5" fill="#20262e" fill-opacity="0.8" stroke="#c8d4e0" stroke-width="0.6"/>
<rect x="454.5" y="838" width="18" height="6" fill="#2a3038" fill-opacity="0.55"/>
<rect x="456" y="838.5" width="0.8" height="5" fill="#c8d4e0" fill-opacity="0.6"/>
<rect x="458" y="838.5" width="0.8" height="5" fill="#c8d4e0" fill-opacity="0.6"/>
<rect x="460" y="838.5" width="0.8" height="5" fill="#c8d4e0" fill-opacity="0.6"/>
<rect x="462" y="838.5" width="0.8" height="5" fill="#c8d4e0" fill-opacity="0.6"/>
<rect x="464" y="838.5" width="0.8" height="5" fill="#c8d4e0" fill-opacity="0.6"/>
<rect x="466" y="838.5" width="0.8" height="5" fill="#c8d4e0" fill-opacity="0.6"/>
<rect x="468" y="838.5" width="0.8" height="5" fill="#c8d4e0" fill-opacity="0.6"/>
<rect x="470" y="838.5" width="0.8" height="5" fill="#c8d4e0" fill-opacity="0.6"/>
<rect x="472" y="838.5" width="0.8" height="5" fill="#c8d4e0" fill-opacity="0.6"/>
<rect x="454.5" y="848" width="18" height="7" fill="#303030" fill-opacity="0.45"/>
<rect x="484" y="824" width="11" height="8" fill="#1e242c" fill-opacity="0.6"/>
<rect x="485" y="826" width="0.8" height="9" fill="#d8e2ec" fill-opacity="0.7"/>
<rect x="485" y="848" width="0.8" height="8" fill="#b0b0b0" fill-opacity="0.35"/>
<rect x="487" y="826" width="0.8" height="9" fill="#d8e2ec" fill-opacity="0.7"/>
<rect x="487" y="848" width="0.8" height="8" fill="#b0b0b0" fill-opacity="0.35"/>
<rect x="489" y="826" width="0.8" height="9" fill="#d8e2ec" fill-opacity="0.7"/>
<rect x="489" y="848" width="0.8" height="8" fill="#b0b0b0" fill-opacity="0.35"/>
<rect x="491" y="826" width="0.8" height="9" fill="#d8e2ec" fill-opacity="0.7"/>
<rect x="491" y="848" width="0.8" height="8" fill="#b0b0b0" fill-opacity="0.35"/>
<rect x="493" y="826" width="0.8" height="9" fill="#d8e2ec" fill-opacity="0.7"/>
<rect x="493" y="848" width="0.8" height="8" fill="#b0b0b0" fill-opacity="0.35"/>
<path d="M505.0 803.6 L520.2 803.3 L520.2 809.9 L505.0 810.2 Z" fill="#4c5e76"/>
<path d="M504.6 811.1 L519.9 810.8 L519.9 817.4 L504.6 817.7 Z" fill="#66788f"/>
<path d="M504.1 818.6 L519.7 818.3 L519.7 825.4 L504.1 825.7 Z" fill="#c0c8d0"/>
<path d="M503.7 826.6 L519.4 826.3 L519.4 834.9 L503.7 835.2 Z" fill="#a2acb6"/>
<path d="M503.2 836.1 L519.1 835.8 L519.1 844.9 L503.2 845.2 Z" fill="#6f7f92"/>
<path d="M503.2 846.1 L519.1 845.8 L519.1 854.4 L503.2 854.7 Z" fill="#6e6e6c"/>
<path d="M503.7 855.6 L519.4 855.3 L519.4 863.8 L503.7 864.1 Z" fill="#60605e"/>
<path d="M504.1 865.0 L519.7 864.7 L519.7 873.4 L504.1 873.7 Z" fill="#52504c"/>
<path d="M504.6 874.6 L519.9 874.3 L519.9 883.4 L504.6 883.7 Z" fill="#44423e"/>
<path d="M505.0 884.6 L520.2 884.3 L520.2 888.9 L505.0 889.2 Z" fill="#363432"/>
<path d="M495 803 L503 802 Q498 846 503 889.5 L495 888 Z" fill="#22303f" fill-opacity="0.55"/>
<path d="M520 801 L534 800 Q548 846 534 891 L520 890 Z" fill="#2c3644" fill-opacity="0.35"/>
<rect x="519" y="800" width="30" height="46" fill="url(#hl2)"/>
<path d="M523 801 Q527 846 523 891" stroke="#b88a2a" stroke-opacity="0.6" stroke-width="0.6" fill="none"/>
<path d="M527 801 Q531 846 527 891" stroke="#b88a2a" stroke-opacity="0.6" stroke-width="0.6" fill="none"/>
<path d="M531 801 Q535 846 531 891" stroke="#b88a2a" stroke-opacity="0.6" stroke-width="0.6" fill="none"/>
<path d="M535 801 Q539 846 535 891" stroke="#b88a2a" stroke-opacity="0.6" stroke-width="0.6" fill="none"/>
<path d="M539 801 Q543 846 539 891" stroke="#b88a2a" stroke-opacity="0.6" stroke-width="0.6" fill="none"/>
<rect x="520" y="806" width="25" height="0.6" fill="#c49a3a" fill-opacity="0.5"/>
<rect x="520" y="812" width="25" height="0.6" fill="#c49a3a" fill-opacity="0.5"/>
<rect x="520" y="818" width="25" height="0.6" fill="#c49a3a" fill-opacity="0.5"/>
<rect x="520" y="824" width="25" height="0.6" fill="#c49a3a" fill-opacity="0.5"/>
<rect x="520" y="830" width="25" height="0.6" fill="#c49a3a" fill-opacity="0.5"/>
<rect x="520" y="836" width="25" height="0.6" fill="#c49a3a" fill-opacity="0.5"/>
<rect x="520" y="842" width="25" height="0.6" fill="#c49a3a" fill-opacity="0.5"/>
<rect x="520" y="850" width="25" height="0.6" fill="#c49a3a" fill-opacity="0.5"/>
<rect x="520" y="856" width="25" height="0.6" fill="#c49a3a" fill-opacity="0.5"/>
<rect x="520" y="862" width="25" height="0.6" fill="#c49a3a" fill-opacity="0.5"/>
<rect x="520" y="868" width="25" height="0.6" fill="#c49a3a" fill-opacity="0.5"/>
<rect x="520" y="874" width="25" height="0.6" fill="#c49a3a" fill-opacity="0.5"/>
<rect x="520" y="880" width="25" height="0.6" fill="#c49a3a" fill-opacity="0.5"/>
<rect x="520" y="886" width="25" height="0.6" fill="#c49a3a" fill-opacity="0.5"/>
<path d="M534 800 L537 798.5 L548 796.5 L553 796.2 Q560 799 565 815 Q570 830 569.7 845 Q570 864 565 878 Q560 892 553 895.8 L548 895.2 L537 892.6 L534 891 Q540 880 543.5 866 Q546.5 846 543.5 826 Q540 811 534 800 Z" fill="url(#flg)"/>
<rect x="545" y="800" width="26" height="44" fill="url(#hl)"/>
<path d="M333 832 Q330 846 333 860" stroke="#b6c6d8" stroke-opacity="0.4" stroke-width="0.6" fill="none"/>
<path d="M338 830 Q335 846 338 862" stroke="#b6c6d8" stroke-opacity="0.4" stroke-width="0.6" fill="none"/>
<path d="M343 826 Q340 846 343 866" stroke="#b6c6d8" stroke-opacity="0.4" stroke-width="0.6" fill="none"/>
<path d="M348 822 Q345 846 348 870" stroke="#b6c6d8" stroke-opacity="0.4" stroke-width="0.6" fill="none"/>
<path d="M353 818 Q350 846 353 874" stroke="#b6c6d8" stroke-opacity="0.4" stroke-width="0.6" fill="none"/>
<path d="M363 812 Q360 846 363 880" stroke="#b6c6d8" stroke-opacity="0.4" stroke-width="0.6" fill="none"/>
<path d="M372 810 Q369 846 372 882" stroke="#b6c6d8" stroke-opacity="0.4" stroke-width="0.6" fill="none"/>
<path d="M380 810 Q377 846 380 882" stroke="#b6c6d8" stroke-opacity="0.4" stroke-width="0.6" fill="none"/>
<path d="M386 810 Q383 846 386 882" stroke="#b6c6d8" stroke-opacity="0.4" stroke-width="0.6" fill="none"/>
<path d="M397 818 Q394 846 397 874" stroke="#b6c6d8" stroke-opacity="0.4" stroke-width="0.6" fill="none"/>
<path d="M404 818 Q401 846 404 874" stroke="#b6c6d8" stroke-opacity="0.4" stroke-width="0.6" fill="none"/>
<path d="M408 816 Q405 846 408 876" stroke="#b6c6d8" stroke-opacity="0.4" stroke-width="0.6" fill="none"/>
<path d="M414 811 Q411 846 414 881" stroke="#b6c6d8" stroke-opacity="0.4" stroke-width="0.6" fill="none"/>
<path d="M443 811 Q440 846 443 881" stroke="#b6c6d8" stroke-opacity="0.4" stroke-width="0.6" fill="none"/>
<path d="M449 818 Q446 846 449 874" stroke="#b6c6d8" stroke-opacity="0.4" stroke-width="0.6" fill="none"/>
<path d="M453 821 Q450 846 453 871" stroke="#b6c6d8" stroke-opacity="0.4" stroke-width="0.6" fill="none"/>
<path d="M474 820 Q471 846 474 872" stroke="#b6c6d8" stroke-opacity="0.4" stroke-width="0.6" fill="none"/>
<path d="M479 816 Q476 846 479 876" stroke="#b6c6d8" stroke-opacity="0.4" stroke-width="0.6" fill="none"/>
<path d="M483 814 Q480 846 483 878" stroke="#b6c6d8" stroke-opacity="0.4" stroke-width="0.6" fill="none"/>
<path d="M495 800 Q492 846 495 892" stroke="#b6c6d8" stroke-opacity="0.4" stroke-width="0.6" fill="none"/>
<path d="M503 798 Q500 846 503 894" stroke="#b6c6d8" stroke-opacity="0.4" stroke-width="0.6" fill="none"/>
<path d="M520 796 Q517 846 520 896" stroke="#b6c6d8" stroke-opacity="0.4" stroke-width="0.6" fill="none"/>
<path d="M534 795 Q531 846 534 897" stroke="#b6c6d8" stroke-opacity="0.4" stroke-width="0.6" fill="none"/>
<path d="M340.5 796 Q337.5 846 340.5 896" stroke="#0c1016" stroke-opacity="0.45" stroke-width="0.9" fill="none"/>
<path d="M350.5 796 Q347.5 846 350.5 896" stroke="#0c1016" stroke-opacity="0.45" stroke-width="0.9" fill="none"/>
<path d="M365 796 Q362 846 365 896" stroke="#0c1016" stroke-opacity="0.45" stroke-width="0.9" fill="none"/>
<path d="M388 796 Q385 846 388 896" stroke="#0c1016" stroke-opacity="0.45" stroke-width="0.9" fill="none"/>
<path d="M399 796 Q396 846 399 896" stroke="#0c1016" stroke-opacity="0.45" stroke-width="0.9" fill="none"/>
<path d="M411 796 Q408 846 411 896" stroke="#0c1016" stroke-opacity="0.45" stroke-width="0.9" fill="none"/>
<path d="M446.5 796 Q443.5 846 446.5 896" stroke="#0c1016" stroke-opacity="0.45" stroke-width="0.9" fill="none"/>
<path d="M451 796 Q448 846 451 896" stroke="#0c1016" stroke-opacity="0.45" stroke-width="0.9" fill="none"/>
<path d="M476.5 796 Q473.5 846 476.5 896" stroke="#0c1016" stroke-opacity="0.45" stroke-width="0.9" fill="none"/>
<path d="M481 796 Q478 846 481 896" stroke="#0c1016" stroke-opacity="0.45" stroke-width="0.9" fill="none"/>
<path d="M498 796 Q495 846 498 896" stroke="#0c1016" stroke-opacity="0.45" stroke-width="0.9" fill="none"/>
<path d="M521.5 796 Q518.5 846 521.5 896" stroke="#0c1016" stroke-opacity="0.45" stroke-width="0.9" fill="none"/>
<rect x="364" y="820" width="32" height="0.6" fill="#d8c078" fill-opacity="0.22"/>
<rect x="364" y="826" width="32" height="0.6" fill="#d8c078" fill-opacity="0.22"/>
<rect x="364" y="832" width="32" height="0.6" fill="#d8c078" fill-opacity="0.22"/>
<rect x="364" y="838" width="32" height="0.6" fill="#d8c078" fill-opacity="0.22"/>
<rect x="364" y="850" width="32" height="0.6" fill="#d8c078" fill-opacity="0.22"/>
<rect x="364" y="856" width="32" height="0.6" fill="#d8c078" fill-opacity="0.22"/>
<rect x="364" y="862" width="32" height="0.6" fill="#d8c078" fill-opacity="0.22"/>
<rect x="364" y="868" width="32" height="0.6" fill="#d8c078" fill-opacity="0.22"/>
<rect x="364" y="874" width="32" height="0.6" fill="#d8c078" fill-opacity="0.22"/>
<rect x="397" y="826" width="17" height="0.7" fill="#c4d2e0" fill-opacity="0.45"/>
<rect x="397" y="832" width="17" height="0.7" fill="#c4d2e0" fill-opacity="0.45"/>
<rect x="397" y="838" width="17" height="0.7" fill="#c4d2e0" fill-opacity="0.45"/>
<rect x="397" y="852" width="17" height="0.7" fill="#c4d2e0" fill-opacity="0.45"/>
<rect x="397" y="858" width="17" height="0.7" fill="#c4d2e0" fill-opacity="0.45"/>
<rect x="397" y="864" width="17" height="0.7" fill="#c4d2e0" fill-opacity="0.45"/>
<rect x="318" y="844.6" width="230" height="1.6" fill="#c2ccd6" fill-opacity="0.3"/>
<rect x="403.0" y="813.9" width="0.8" height="0.8" fill="#0a0c10" fill-opacity="0.28"/>
<rect x="526.0" y="819.8" width="1" height="0.7" fill="#dfe8f2" fill-opacity="0.40"/>
<rect x="347.4" y="852.0" width="0.8" height="1" fill="#0a0c10" fill-opacity="0.47"/>
<rect x="345.4" y="820.3" width="2.2" height="0.7" fill="#dfe8f2" fill-opacity="0.30"/>
<rect x="454.9" y="851.5" width="0.8" height="1.6" fill="#0a0c10" fill-opacity="0.29"/>
<rect x="484.5" y="851.9" width="2.2" height="0.8" fill="#0a0c10" fill-opacity="0.42"/>
<rect x="528.9" y="833.3" width="1" height="0.7" fill="#dfe8f2" fill-opacity="0.31"/>
<rect x="445.3" y="880.5" width="0.8" height="0.7" fill="#0a0c10" fill-opacity="0.35"/>
<rect x="369.6" y="831.5" width="0.8" height="1" fill="#0a0c10" fill-opacity="0.40"/>
<rect x="518.9" y="828.9" width="2.2" height="0.7" fill="#0a0c10" fill-opacity="0.46"/>
<rect x="533.4" y="843.6" width="1.4" height="1" fill="#0a0c10" fill-opacity="0.27"/>
<rect x="478.1" y="841.0" width="1.4" height="0.7" fill="#0a0c10" fill-opacity="0.56"/>
<rect x="409.6" y="856.2" width="1.4" height="0.7" fill="#dfe8f2" fill-opacity="0.33"/>
<rect x="418.6" y="884.3" width="1" height="3.5200000000000005" fill="#dfe8f2" fill-opacity="0.31"/>
<rect x="363.8" y="839.6" width="1.4" height="1" fill="#dfe8f2" fill-opacity="0.50"/>
<rect x="536.1" y="813.9" width="1" height="0.7" fill="#dfe8f2" fill-opacity="0.33"/>
<rect x="458.7" y="824.2" width="1.4" height="1" fill="#dfe8f2" fill-opacity="0.40"/>
<rect x="535.2" y="863.5" width="0.8" height="0.8" fill="#dfe8f2" fill-opacity="0.47"/>
<rect x="498.8" y="880.5" width="0.8" height="3.5200000000000005" fill="#0a0c10" fill-opacity="0.39"/>
<rect x="468.2" y="805.7" width="0.7" height="1.6" fill="#dfe8f2" fill-opacity="0.32"/>
<rect x="346.0" y="800.0" width="1" height="2.2399999999999998" fill="#dfe8f2" fill-opacity="0.29"/>
<rect x="518.6" y="856.5" width="1.4" height="1" fill="#dfe8f2" fill-opacity="0.34"/>
<rect x="360.8" y="878.1" width="0.8" height="3.5200000000000005" fill="#0a0c10" fill-opacity="0.41"/>
<rect x="356.5" y="831.5" width="1" height="1.6" fill="#dfe8f2" fill-opacity="0.54"/>
<rect x="534.7" y="848.6" width="1" height="1.2800000000000002" fill="#dfe8f2" fill-opacity="0.44"/>
<rect x="470.0" y="808.4" width="1" height="0.8" fill="#0a0c10" fill-opacity="0.43"/>
<rect x="446.8" y="871.7" width="1" height="0.7" fill="#dfe8f2" fill-opacity="0.33"/>
<rect x="490.4" y="820.9" width="0.8" height="0.7" fill="#dfe8f2" fill-opacity="0.37"/>
<rect x="434.2" y="817.8" width="0.8" height="2.2399999999999998" fill="#0a0c10" fill-opacity="0.37"/>
<rect x="356.5" y="843.2" width="0.8" height="0.8" fill="#dfe8f2" fill-opacity="0.42"/>
<rect x="407.2" y="859.2" width="2.2" height="1" fill="#0a0c10" fill-opacity="0.29"/>
<rect x="435.4" y="816.4" width="2.2" height="0.8" fill="#0a0c10" fill-opacity="0.37"/>
<rect x="533.8" y="866.7" width="1" height="1" fill="#dfe8f2" fill-opacity="0.29"/>
<rect x="504.4" y="813.4" width="1.4" height="0.7" fill="#0a0c10" fill-opacity="0.59"/>
<rect x="362.5" y="801.3" width="1" height="0.8" fill="#0a0c10" fill-opacity="0.48"/>
<rect x="375.9" y="880.4" width="1" height="1.6" fill="#dfe8f2" fill-opacity="0.32"/>
<rect x="449.3" y="876.7" width="2.2" height="1" fill="#dfe8f2" fill-opacity="0.51"/>
<rect x="524.9" y="838.7" width="1" height="1" fill="#0a0c10" fill-opacity="0.43"/>
<rect x="518.3" y="871.4" width="0.7" height="1.6" fill="#0a0c10" fill-opacity="0.52"/>
<rect x="465.0" y="811.1" width="2.2" height="0.7" fill="#dfe8f2" fill-opacity="0.49"/>
<rect x="346.9" y="817.6" width="1" height="3.5200000000000005" fill="#dfe8f2" fill-opacity="0.28"/>
<rect x="522.7" y="805.8" width="1" height="1.6" fill="#dfe8f2" fill-opacity="0.59"/>
<rect x="441.7" y="874.3" width="1.4" height="1" fill="#dfe8f2" fill-opacity="0.34"/>
<rect x="377.5" y="841.2" width="1.4" height="0.7" fill="#dfe8f2" fill-opacity="0.39"/>
<rect x="425.0" y="819.6" width="1" height="1" fill="#dfe8f2" fill-opacity="0.29"/>
<rect x="411.9" y="823.3" width="0.8" height="0.8" fill="#dfe8f2" fill-opacity="0.41"/>
<rect x="369.2" y="861.4" width="2.2" height="0.8" fill="#dfe8f2" fill-opacity="0.50"/>
<rect x="409.9" y="808.5" width="2.2" height="0.8" fill="#dfe8f2" fill-opacity="0.37"/>
<rect x="415.7" y="847.6" width="0.8" height="0.7" fill="#dfe8f2" fill-opacity="0.59"/>
<rect x="357.0" y="824.4" width="1.4" height="0.7" fill="#dfe8f2" fill-opacity="0.52"/>
<rect x="513.4" y="862.2" width="1" height="3.5200000000000005" fill="#0a0c10" fill-opacity="0.39"/>
<rect x="393.6" y="873.6" width="1.4" height="0.7" fill="#dfe8f2" fill-opacity="0.56"/>
<rect x="503.3" y="807.7" width="0.8" height="1.2800000000000002" fill="#0a0c10" fill-opacity="0.27"/>
<rect x="543.8" y="838.4" width="0.8" height="1" fill="#0a0c10" fill-opacity="0.47"/>
<rect x="532.0" y="889.2" width="1" height="2.2399999999999998" fill="#dfe8f2" fill-opacity="0.31"/>
<rect x="494.5" y="826.7" width="1.4" height="0.7" fill="#dfe8f2" fill-opacity="0.31"/>
<rect x="342.8" y="801.7" width="2.2" height="0.7" fill="#dfe8f2" fill-opacity="0.59"/>
<rect x="357.3" y="875.3" width="1" height="3.5200000000000005" fill="#dfe8f2" fill-opacity="0.42"/>
<rect x="380.2" y="821.1" width="1" height="0.8" fill="#dfe8f2" fill-opacity="0.56"/>
<rect x="541.2" y="877.0" width="0.8" height="2.2399999999999998" fill="#dfe8f2" fill-opacity="0.47"/>
<rect x="352.7" y="877.4" width="1" height="2.2399999999999998" fill="#0a0c10" fill-opacity="0.48"/>
<rect x="396.5" y="842.3" width="1.4" height="0.8" fill="#dfe8f2" fill-opacity="0.41"/>
<rect x="539.3" y="850.3" width="1.4" height="0.7" fill="#dfe8f2" fill-opacity="0.59"/>
<rect x="335.2" y="835.1" width="1" height="0.7" fill="#dfe8f2" fill-opacity="0.43"/>
<rect x="336.0" y="824.3" width="0.8" height="1.2800000000000002" fill="#dfe8f2" fill-opacity="0.39"/>
<rect x="398.9" y="821.4" width="1" height="1" fill="#dfe8f2" fill-opacity="0.44"/>
<rect x="499.6" y="854.9" width="0.7" height="3.5200000000000005" fill="#0a0c10" fill-opacity="0.50"/>
<rect x="464.9" y="813.3" width="2.2" height="1" fill="#0a0c10" fill-opacity="0.50"/>
<rect x="441.2" y="883.7" width="0.8" height="1" fill="#0a0c10" fill-opacity="0.45"/>
<rect x="522.5" y="862.8" width="0.7" height="1.2800000000000002" fill="#0a0c10" fill-opacity="0.33"/>
<rect x="410.7" y="809.7" width="0.8" height="1" fill="#0a0c10" fill-opacity="0.45"/>
<rect x="386.4" y="824.3" width="0.8" height="1" fill="#dfe8f2" fill-opacity="0.27"/>
<rect x="491.6" y="843.6" width="1" height="1" fill="#0a0c10" fill-opacity="0.55"/>
<rect x="383.5" y="859.8" width="0.8" height="0.8" fill="#dfe8f2" fill-opacity="0.55"/>
<rect x="395.3" y="804.3" width="0.8" height="1.6" fill="#0a0c10" fill-opacity="0.32"/>
<rect x="491.1" y="828.0" width="0.8" height="1.2800000000000002" fill="#dfe8f2" fill-opacity="0.25"/>
<rect x="476.1" y="863.7" width="1.4" height="0.8" fill="#0a0c10" fill-opacity="0.35"/>
<rect x="496.1" y="891.4" width="0.8" height="1.2800000000000002" fill="#dfe8f2" fill-opacity="0.36"/>
<rect x="431.4" y="875.4" width="0.8" height="2.2399999999999998" fill="#0a0c10" fill-opacity="0.41"/>
<rect x="533.6" y="819.4" width="0.8" height="2.2399999999999998" fill="#dfe8f2" fill-opacity="0.30"/>
<rect x="507.2" y="846.8" width="1" height="0.8" fill="#0a0c10" fill-opacity="0.50"/>
<rect x="437.1" y="802.3" width="0.8" height="3.5200000000000005" fill="#dfe8f2" fill-opacity="0.42"/>
<rect x="364.5" y="831.6" width="0.8" height="0.8" fill="#dfe8f2" fill-opacity="0.54"/>
<rect x="511.2" y="811.0" width="1.4" height="0.8" fill="#0a0c10" fill-opacity="0.50"/>
<rect x="417.5" y="891.9" width="2.2" height="0.8" fill="#dfe8f2" fill-opacity="0.38"/>
<rect x="393.9" y="804.7" width="1" height="0.7" fill="#0a0c10" fill-opacity="0.47"/>
<rect x="426.6" y="829.0" width="2.2" height="0.7" fill="#0a0c10" fill-opacity="0.52"/>
<rect x="467.5" y="884.0" width="0.8" height="0.7" fill="#0a0c10" fill-opacity="0.44"/>
<rect x="421.3" y="856.6" width="2.2" height="0.7" fill="#dfe8f2" fill-opacity="0.55"/>
<rect x="450.5" y="815.7" width="1.4" height="1" fill="#dfe8f2" fill-opacity="0.35"/>
<rect x="472.1" y="837.4" width="0.7" height="3.5200000000000005" fill="#dfe8f2" fill-opacity="0.42"/>
<rect x="368.9" y="819.1" width="1" height="0.8" fill="#0a0c10" fill-opacity="0.42"/>
<rect x="544.3" y="841.4" width="0.7" height="1.2800000000000002" fill="#dfe8f2" fill-opacity="0.32"/>
<rect x="354.1" y="822.0" width="0.8" height="1" fill="#dfe8f2" fill-opacity="0.45"/>
<rect x="415.4" y="868.6" width="0.8" height="1.2800000000000002" fill="#dfe8f2" fill-opacity="0.34"/>
<rect x="538.2" y="811.6" width="0.7" height="1.6" fill="#dfe8f2" fill-opacity="0.47"/>
<rect x="387.2" y="836.8" width="0.7" height="1.2800000000000002" fill="#dfe8f2" fill-opacity="0.58"/>
<rect x="484.0" y="882.4" width="0.8" height="0.7" fill="#dfe8f2" fill-opacity="0.46"/>
<rect x="529.6" y="876.0" width="0.7" height="1.6" fill="#0a0c10" fill-opacity="0.59"/>
<rect x="366.9" y="889.4" width="2.2" height="0.7" fill="#dfe8f2" fill-opacity="0.54"/>
<rect x="343.3" y="872.0" width="1.4" height="0.7" fill="#dfe8f2" fill-opacity="0.57"/>
<rect x="445.9" y="840.2" width="1.4" height="1" fill="#0a0c10" fill-opacity="0.28"/>
<rect x="375.3" y="824.0" width="0.8" height="2.2399999999999998" fill="#0a0c10" fill-opacity="0.25"/>
<rect x="401.4" y="877.2" width="1" height="0.7" fill="#dfe8f2" fill-opacity="0.43"/>
<rect x="483.0" y="828.3" width="0.7" height="3.5200000000000005" fill="#dfe8f2" fill-opacity="0.42"/>
<rect x="475.1" y="885.1" width="1.4" height="1" fill="#dfe8f2" fill-opacity="0.26"/>
<rect x="478.3" y="818.2" width="0.8" height="0.7" fill="#0a0c10" fill-opacity="0.51"/>
<rect x="377.1" y="870.5" width="0.8" height="2.2399999999999998" fill="#dfe8f2" fill-opacity="0.41"/>
<rect x="466.0" y="856.1" width="1" height="1.2800000000000002" fill="#0a0c10" fill-opacity="0.42"/>
<rect x="417.6" y="819.6" width="1" height="1.2800000000000002" fill="#0a0c10" fill-opacity="0.30"/>
<rect x="417.6" y="882.6" width="0.7" height="1.2800000000000002" fill="#0a0c10" fill-opacity="0.51"/>
<rect x="374.0" y="886.1" width="2.2" height="0.8" fill="#0a0c10" fill-opacity="0.26"/>
<rect x="427.9" y="810.0" width="2.2" height="0.7" fill="#dfe8f2" fill-opacity="0.28"/>
<rect x="494.3" y="835.0" width="0.7" height="3.5200000000000005" fill="#0a0c10" fill-opacity="0.36"/>
<rect x="434.4" y="834.3" width="1.4" height="1" fill="#0a0c10" fill-opacity="0.32"/>
<rect x="341.4" y="837.8" width="0.8" height="1.2800000000000002" fill="#0a0c10" fill-opacity="0.52"/>
<rect x="348.1" y="884.6" width="0.8" height="2.2399999999999998" fill="#dfe8f2" fill-opacity="0.51"/>
<rect x="536.1" y="856.8" width="0.8" height="2.2399999999999998" fill="#dfe8f2" fill-opacity="0.50"/>
<rect x="486.5" y="854.8" width="0.8" height="0.7" fill="#0a0c10" fill-opacity="0.58"/>
<rect x="357.5" y="865.8" width="1.4" height="0.8" fill="#dfe8f2" fill-opacity="0.52"/>
<rect x="362.9" y="845.7" width="1.4" height="1" fill="#dfe8f2" fill-opacity="0.58"/>
<rect x="462.5" y="830.2" width="1" height="1.2800000000000002" fill="#dfe8f2" fill-opacity="0.38"/>
<rect x="493.1" y="822.8" width="1.4" height="0.7" fill="#dfe8f2" fill-opacity="0.26"/>
<rect x="520.5" y="890.9" width="0.8" height="0.8" fill="#dfe8f2" fill-opacity="0.28"/>
<rect x="484.1" y="841.1" width="1" height="1" fill="#dfe8f2" fill-opacity="0.40"/>
<rect x="497.5" y="869.9" width="1" height="2.2399999999999998" fill="#0a0c10" fill-opacity="0.35"/>
<rect x="388.4" y="824.0" width="0.7" height="1.6" fill="#dfe8f2" fill-opacity="0.32"/>
<rect x="525.6" y="817.3" width="1" height="1" fill="#dfe8f2" fill-opacity="0.34"/>
<rect x="471.4" y="809.2" width="0.8" height="0.8" fill="#dfe8f2" fill-opacity="0.26"/>
<rect x="383.5" y="841.2" width="0.7" height="1.6" fill="#dfe8f2" fill-opacity="0.56"/>
<rect x="461.1" y="876.2" width="1" height="0.8" fill="#dfe8f2" fill-opacity="0.28"/>
<rect x="497.7" y="861.2" width="0.7" height="2.2399999999999998" fill="#dfe8f2" fill-opacity="0.47"/>
<rect x="406.4" y="804.1" width="1" height="0.7" fill="#0a0c10" fill-opacity="0.26"/>
<rect x="420.9" y="834.2" width="0.8" height="0.8" fill="#0a0c10" fill-opacity="0.28"/>
<rect x="348.3" y="809.3" width="1" height="1.2800000000000002" fill="#dfe8f2" fill-opacity="0.44"/>
<rect x="481.0" y="837.7" width="0.8" height="0.8" fill="#dfe8f2" fill-opacity="0.36"/>
<rect x="520.6" y="838.1" width="1" height="2.2399999999999998" fill="#dfe8f2" fill-opacity="0.52"/>
<rect x="487.9" y="818.7" width="2.2" height="0.7" fill="#dfe8f2" fill-opacity="0.57"/>
<rect x="420.3" y="881.2" width="0.8" height="0.7" fill="#dfe8f2" fill-opacity="0.31"/>
<rect x="469.5" y="883.7" width="1.4" height="1" fill="#dfe8f2" fill-opacity="0.47"/>
<rect x="365.6" y="826.1" width="0.8" height="0.8" fill="#dfe8f2" fill-opacity="0.57"/>
<rect x="504.0" y="889.0" width="0.8" height="1.2800000000000002" fill="#dfe8f2" fill-opacity="0.29"/>
<rect x="462.6" y="858.5" width="1" height="1" fill="#dfe8f2" fill-opacity="0.50"/>
<rect x="381.6" y="837.2" width="1" height="1.6" fill="#0a0c10" fill-opacity="0.54"/>
<rect x="418.9" y="847.6" width="1" height="1" fill="#dfe8f2" fill-opacity="0.29"/>
<rect x="375.4" y="881.3" width="1.4" height="0.7" fill="#0a0c10" fill-opacity="0.49"/>
<rect x="430.7" y="878.1" width="1" height="2.2399999999999998" fill="#0a0c10" fill-opacity="0.48"/>
<rect x="416.7" y="833.8" width="0.8" height="1" fill="#dfe8f2" fill-opacity="0.31"/>
<rect x="432.7" y="841.1" width="1" height="0.8" fill="#0a0c10" fill-opacity="0.54"/>
<rect x="349.1" y="833.0" width="0.8" height="0.7" fill="#dfe8f2" fill-opacity="0.53"/>
<rect x="352.3" y="867.5" width="0.8" height="1" fill="#0a0c10" fill-opacity="0.43"/>
<rect x="472.1" y="872.2" width="0.7" height="1.2800000000000002" fill="#dfe8f2" fill-opacity="0.27"/>
<rect x="521.0" y="826.5" width="1" height="0.7" fill="#0a0c10" fill-opacity="0.53"/>
<rect x="463.2" y="823.2" width="0.7" height="3.5200000000000005" fill="#dfe8f2" fill-opacity="0.46"/>
<rect x="537.5" y="844.2" width="1" height="0.8" fill="#dfe8f2" fill-opacity="0.47"/>
<rect x="376.8" y="837.1" width="0.8" height="2.2399999999999998" fill="#0a0c10" fill-opacity="0.35"/>
<rect x="499.8" y="810.6" width="1.4" height="0.8" fill="#dfe8f2" fill-opacity="0.47"/>
<rect x="456.8" y="881.2" width="2.2" height="1" fill="#dfe8f2" fill-opacity="0.60"/>
<rect x="390.6" y="891.1" width="0.8" height="1.2800000000000002" fill="#dfe8f2" fill-opacity="0.38"/>
<rect x="464.2" y="888.1" width="1.4" height="1" fill="#dfe8f2" fill-opacity="0.43"/>
<rect x="517.8" y="885.4" width="0.7" height="1.2800000000000002" fill="#0a0c10" fill-opacity="0.51"/>
<rect x="464.4" y="839.8" width="0.8" height="1.6" fill="#dfe8f2" fill-opacity="0.56"/>
<rect x="472.2" y="802.1" width="0.8" height="1" fill="#dfe8f2" fill-opacity="0.37"/>
<rect x="382.1" y="853.7" width="0.7" height="3.5200000000000005" fill="#dfe8f2" fill-opacity="0.32"/>
<rect x="531.7" y="822.4" width="1" height="1" fill="#dfe8f2" fill-opacity="0.28"/>
<rect x="419.4" y="824.3" width="1.4" height="1" fill="#dfe8f2" fill-opacity="0.48"/>
<rect x="428.2" y="886.2" width="0.7" height="1.2800000000000002" fill="#0a0c10" fill-opacity="0.34"/>
<rect x="340.3" y="817.1" width="0.8" height="0.7" fill="#dfe8f2" fill-opacity="0.57"/>
<rect x="472.9" y="818.1" width="1" height="3.5200000000000005" fill="#dfe8f2" fill-opacity="0.43"/>
<rect x="400.0" y="827.6" width="2.2" height="1" fill="#dfe8f2" fill-opacity="0.56"/>
<rect x="413.8" y="840.2" width="0.7" height="3.5200000000000005" fill="#0a0c10" fill-opacity="0.28"/>
<rect x="357.1" y="821.4" width="1" height="2.2399999999999998" fill="#dfe8f2" fill-opacity="0.37"/>
<rect x="468.5" y="862.5" width="1.4" height="0.8" fill="#0a0c10" fill-opacity="0.57"/>
<rect x="537.7" y="820.0" width="1.4" height="0.7" fill="#0a0c10" fill-opacity="0.26"/>
<rect x="377.6" y="814.6" width="2.2" height="0.8" fill="#0a0c10" fill-opacity="0.32"/>
<rect x="414.7" y="878.4" width="2.2" height="0.8" fill="#0a0c10" fill-opacity="0.59"/>
<rect x="481.5" y="878.9" width="1.4" height="0.7" fill="#dfe8f2" fill-opacity="0.50"/>
<rect x="457.9" y="852.0" width="0.8" height="0.7" fill="#dfe8f2" fill-opacity="0.26"/>
<rect x="369.0" y="889.9" width="1" height="1" fill="#0a0c10" fill-opacity="0.26"/>
<rect x="344.0" y="806.2" width="1.4" height="0.7" fill="#dfe8f2" fill-opacity="0.55"/>
<rect x="507.1" y="882.0" width="0.7" height="3.5200000000000005" fill="#dfe8f2" fill-opacity="0.55"/>
<rect x="377.7" y="803.1" width="0.8" height="1" fill="#0a0c10" fill-opacity="0.57"/>
<rect x="435.2" y="812.2" width="0.8" height="2.2399999999999998" fill="#0a0c10" fill-opacity="0.48"/>
<rect x="389.8" y="832.3" width="1.4" height="0.8" fill="#0a0c10" fill-opacity="0.27"/>
<rect x="461.4" y="843.8" width="2.2" height="0.7" fill="#dfe8f2" fill-opacity="0.51"/>
<rect x="497.3" y="831.9" width="1" height="1" fill="#0a0c10" fill-opacity="0.44"/>
<rect x="354.1" y="875.4" width="1" height="0.8" fill="#dfe8f2" fill-opacity="0.25"/>
<rect x="540.4" y="800.4" width="1" height="0.8" fill="#dfe8f2" fill-opacity="0.42"/>
<rect x="536.0" y="847.4" width="1" height="1.6" fill="#dfe8f2" fill-opacity="0.31"/>
<rect x="369.8" y="886.4" width="1" height="1.2800000000000002" fill="#0a0c10" fill-opacity="0.42"/>
<rect x="355.0" y="885.4" width="1" height="3.5200000000000005" fill="#0a0c10" fill-opacity="0.51"/>
<rect x="378.3" y="824.2" width="1" height="3.5200000000000005" fill="#0a0c10" fill-opacity="0.43"/>
<rect x="431.8" y="848.9" width="0.8" height="0.8" fill="#0a0c10" fill-opacity="0.51"/>
<rect x="444.6" y="879.9" width="1.4" height="0.7" fill="#dfe8f2" fill-opacity="0.44"/>
<rect x="479.7" y="823.7" width="1" height="1.6" fill="#dfe8f2" fill-opacity="0.37"/>
<rect x="398.3" y="864.7" width="1" height="0.7" fill="#0a0c10" fill-opacity="0.30"/>
<rect x="461.6" y="832.1" width="1.4" height="1" fill="#dfe8f2" fill-opacity="0.58"/>
<rect x="369.6" y="860.5" width="1" height="0.8" fill="#dfe8f2" fill-opacity="0.30"/>
<rect x="426.3" y="818.0" width="1" height="0.8" fill="#0a0c10" fill-opacity="0.29"/>
<rect x="337.6" y="878.6" width="0.8" height="2.2399999999999998" fill="#dfe8f2" fill-opacity="0.33"/>
<rect x="389.0" y="867.9" width="2.2" height="1" fill="#dfe8f2" fill-opacity="0.33"/>
<rect x="492.3" y="838.7" width="1" height="1.6" fill="#dfe8f2" fill-opacity="0.50"/>
<rect x="361.1" y="839.8" width="2.2" height="0.7" fill="#dfe8f2" fill-opacity="0.50"/>
<rect x="484.8" y="857.9" width="2.2" height="0.7" fill="#dfe8f2" fill-opacity="0.40"/>
<rect x="421.0" y="862.1" width="1.4" height="0.7" fill="#0a0c10" fill-opacity="0.31"/>
<rect x="437.9" y="889.7" width="1" height="1" fill="#dfe8f2" fill-opacity="0.44"/>
<rect x="532.5" y="847.8" width="1" height="1" fill="#dfe8f2" fill-opacity="0.45"/>
<rect x="338.4" y="872.9" width="2.2" height="0.7" fill="#dfe8f2" fill-opacity="0.37"/>
<rect x="373.6" y="847.3" width="1" height="2.2399999999999998" fill="#0a0c10" fill-opacity="0.51"/>
<rect x="392.6" y="836.8" width="2.2" height="1" fill="#dfe8f2" fill-opacity="0.40"/>
<rect x="408.9" y="824.4" width="1" height="0.8" fill="#dfe8f2" fill-opacity="0.51"/>
<rect x="369.6" y="885.5" width="1" height="0.8" fill="#dfe8f2" fill-opacity="0.53"/>
<rect x="486.3" y="874.9" width="2.2" height="0.8" fill="#dfe8f2" fill-opacity="0.48"/>
<rect x="494.6" y="859.8" width="1" height="0.8" fill="#0a0c10" fill-opacity="0.41"/>
<rect x="479.4" y="890.4" width="0.8" height="2.2399999999999998" fill="#0a0c10" fill-opacity="0.42"/>
<rect x="398.4" y="844.1" width="1.4" height="0.7" fill="#dfe8f2" fill-opacity="0.47"/>
<rect x="514.4" y="805.2" width="1" height="1" fill="#0a0c10" fill-opacity="0.57"/>
<rect x="468.0" y="801.4" width="1.4" height="0.8" fill="#dfe8f2" fill-opacity="0.58"/>
<rect x="456.5" y="878.6" width="1" height="0.7" fill="#dfe8f2" fill-opacity="0.41"/>
<rect x="501.3" y="815.4" width="0.8" height="1" fill="#0a0c10" fill-opacity="0.46"/>
<rect x="450.2" y="858.6" width="1" height="1.6" fill="#dfe8f2" fill-opacity="0.42"/>
<rect x="511.2" y="861.8" width="2.2" height="0.7" fill="#dfe8f2" fill-opacity="0.29"/>
<rect x="434.4" y="851.3" width="2.2" height="0.7" fill="#dfe8f2" fill-opacity="0.57"/>
<rect x="448.3" y="879.4" width="2.2" height="1" fill="#dfe8f2" fill-opacity="0.54"/>
<rect x="474.7" y="877.3" width="0.8" height="0.7" fill="#dfe8f2" fill-opacity="0.40"/>
<rect x="468.6" y="802.6" width="1.4" height="0.7" fill="#0a0c10" fill-opacity="0.49"/>
<rect x="436.8" y="882.6" width="0.8" height="1.6" fill="#dfe8f2" fill-opacity="0.50"/>
<rect x="473.4" y="831.4" width="1" height="0.8" fill="#0a0c10" fill-opacity="0.44"/>
<rect x="423.7" y="851.0" width="0.8" height="3.5200000000000005" fill="#0a0c10" fill-opacity="0.35"/>
<rect x="541.7" y="880.3" width="0.7" height="3.5200000000000005" fill="#dfe8f2" fill-opacity="0.32"/>
<rect x="401.6" y="827.5" width="0.8" height="0.8" fill="#dfe8f2" fill-opacity="0.47"/>
<rect x="521.0" y="850.2" width="0.7" height="1.2800000000000002" fill="#dfe8f2" fill-opacity="0.36"/>
<rect x="528.5" y="856.0" width="1" height="3.5200000000000005" fill="#0a0c10" fill-opacity="0.53"/>
<rect x="476.5" y="863.4" width="0.8" height="1" fill="#0a0c10" fill-opacity="0.28"/>
<rect x="466.3" y="816.0" width="2.2" height="0.7" fill="#0a0c10" fill-opacity="0.55"/>
<rect x="472.7" y="833.9" width="0.8" height="2.2399999999999998" fill="#0a0c10" fill-opacity="0.53"/>
<rect x="342.2" y="801.9" width="0.8" height="0.8" fill="#dfe8f2" fill-opacity="0.45"/>
<rect x="343.3" y="810.9" width="0.8" height="3.5200000000000005" fill="#0a0c10" fill-opacity="0.45"/>
<rect x="477.8" y="854.6" width="1" height="0.8" fill="#0a0c10" fill-opacity="0.48"/>
<rect x="450.2" y="807.6" width="0.8" height="1.2800000000000002" fill="#dfe8f2" fill-opacity="0.56"/>
<rect x="478.6" y="811.2" width="0.8" height="0.7" fill="#0a0c10" fill-opacity="0.28"/>
<rect x="392.8" y="852.3" width="0.8" height="0.8" fill="#dfe8f2" fill-opacity="0.51"/>
<rect x="484.8" y="878.7" width="2.2" height="0.8" fill="#0a0c10" fill-opacity="0.28"/>
<rect x="521.9" y="884.0" width="0.8" height="0.7" fill="#dfe8f2" fill-opacity="0.26"/>
<rect x="479.2" y="856.9" width="1" height="0.8" fill="#dfe8f2" fill-opacity="0.36"/>
<rect x="401.4" y="887.3" width="1" height="0.7" fill="#0a0c10" fill-opacity="0.41"/>
<rect x="359.5" y="887.8" width="2.2" height="0.8" fill="#dfe8f2" fill-opacity="0.53"/>
<rect x="430.1" y="825.0" width="1.4" height="0.7" fill="#0a0c10" fill-opacity="0.37"/>
<rect x="471.7" y="873.8" width="0.8" height="0.7" fill="#dfe8f2" fill-opacity="0.55"/>
<rect x="399.8" y="839.4" width="2.2" height="1" fill="#0a0c10" fill-opacity="0.38"/>
<rect x="384.2" y="841.5" width="0.8" height="2.2399999999999998" fill="#0a0c10" fill-opacity="0.36"/>
<rect x="528.3" y="870.2" width="1" height="1.6" fill="#0a0c10" fill-opacity="0.35"/>
<rect x="539.8" y="873.3" width="2.2" height="0.8" fill="#dfe8f2" fill-opacity="0.52"/>
<rect x="448.4" y="844.6" width="1" height="0.8" fill="#dfe8f2" fill-opacity="0.53"/>
<rect x="477.3" y="842.8" width="0.8" height="0.8" fill="#dfe8f2" fill-opacity="0.34"/>
<rect x="353.4" y="874.2" width="1" height="2.2399999999999998" fill="#0a0c10" fill-opacity="0.33"/>
<rect x="441.3" y="818.6" width="1.4" height="0.8" fill="#dfe8f2" fill-opacity="0.28"/>
<rect x="410.4" y="871.7" width="2.2" height="0.8" fill="#0a0c10" fill-opacity="0.34"/>
<rect x="413.1" y="842.6" width="0.8" height="1.2800000000000002" fill="#dfe8f2" fill-opacity="0.36"/>
<rect x="462.5" y="808.7" width="2.2" height="1" fill="#dfe8f2" fill-opacity="0.55"/>
</g>
<path d="M320.5 842.5 L323 838 L332 833.5 L337 830 L341 824 L347 819 L353 816 L362 813.5 L369 812.6 L372 814.5 L386 815 L392 818.5 L397 822.5 L404 822.5 L408 820 L414 816 L418 814.5 L436 814 L439.5 812.8 L445 817 L449 822.5 L452 826 L462 825 L474 824.5 L479 819 L483 817.5 L494 817.5 L495 803 L497 801 L515 800.5 L534 800 L537 798.5 L548 796.5 L553 796.2 Q560 799 565 815 Q570 830 569.7 845 Q570 864 565 878 Q560 892 553 895.8 L548 895.2 L537 892.6 L534 891 L515 890 L497 889.5 L495 888 L494 875.5 L483 873 L479 871.5 L474 869 L462 866 L452 864 L449 868 L445 874 L439.5 879.5 L436 878.5 L418 877 L414 875 L408 871 L404 869 L397 869 L392 873.5 L386 877.5 L372 879 L369 879.3 L362 877.5 L353 873.5 L347 868.5 L341 863 L337 857 L332 852.5 L323 848 Z" fill="none" stroke="#8fa6c0" stroke-opacity="0.5" stroke-width="0.7"/>
<path d="M458 824 L462 819.5" stroke="#7e8ea0" stroke-width="1.6"/><path d="M459 867 L464 872" stroke="#5c5c5a" stroke-width="1.6"/><path d="M472 860 Q482 866 496 869" stroke="#8a96a4" stroke-width="1.1" fill="none"/>
</svg>
<div class="r" style="left:243px;top:962.4px;width:138px;height:24.2px;background:#f4f4f4;border-radius:2.5px;"></div>
<div class="t" style="left:262.30px;top:966.40px;font-size:20.8px;color:#323232;letter-spacing:1.495px;line-height:24px;height:24px;margin-top:-4px;-webkit-text-stroke:0.3px #323232;transform:scaleY(0.935);transform-origin:0 50%;">PISTONS</div>
<div class="r" style="left:400px;top:962.4px;width:138px;height:24.2px;background:#f4f4f4;border-radius:2.5px;"></div>
<div class="t" style="left:441.60px;top:966.40px;font-size:20.8px;color:#323232;letter-spacing:1.333px;line-height:24px;height:24px;margin-top:-4px;-webkit-text-stroke:0.3px #323232;transform:scaleY(0.935);transform-origin:0 50%;">GRID</div>
<div class="r" style="left:555.5px;top:962.4px;width:138px;height:24.2px;background:#f4f4f4;border-radius:2.5px;"></div>
<div class="t" style="left:586.80px;top:966.40px;font-size:20.8px;color:#323232;letter-spacing:1.538px;line-height:24px;height:24px;margin-top:-4px;-webkit-text-stroke:0.3px #323232;transform:scaleY(0.935);transform-origin:0 50%;">TUBES</div>
<div class="r" style="left:712px;top:962.4px;width:138px;height:24.2px;background:#f4f4f4;border-radius:2.5px;"></div>
<div class="t" style="left:753.30px;top:966.40px;font-size:20.8px;color:#323232;letter-spacing:1.175px;line-height:24px;height:24px;margin-top:-4px;-webkit-text-stroke:0.3px #323232;transform:scaleY(0.935);transform-origin:0 50%;">HULL</div>
<div class="r" style="left:0px;top:1018px;width:1920px;height:22px;background:#191919;"></div>
<svg class="r" style="left:2.5px;top:1022px;" width="14" height="14" viewBox="0 0 14 14"><circle cx="6.6" cy="6.4" r="6.2" fill="#d8d8d8"/><path d="M2 10.5 L1.4 13.6 L5.2 12.2 Z" fill="#d8d8d8"/><rect x="5.7" y="2.6" width="1.9" height="5" fill="#191919"/><rect x="5.7" y="8.6" width="1.9" height="1.9" fill="#191919"/></svg>
<div class="t" style="left:20.60px;top:1021.70px;font-size:12.5px;color:#b0b0b0;letter-spacing:0.068px;">[TMP Essential Resources] have been imported.</div>
<div class="r" style="left:1815px;top:1020px;width:1px;height:19px;background:#232323;"></div>
<div class="r" style="left:1841px;top:1020px;width:1px;height:19px;background:#232323;"></div>
<div class="r" style="left:1867px;top:1020px;width:1px;height:19px;background:#232323;"></div>
<div class="r" style="left:1893px;top:1020px;width:1px;height:19px;background:#232323;"></div>
<svg class="r" style="left:1820px;top:1022px;" width="16" height="16" viewBox="0 0 16 16"><ellipse cx="8" cy="9.6" rx="4.4" ry="5" fill="#c0c0c0"/><circle cx="8" cy="4" r="2.4" fill="#c0c0c0"/><path d="M1.8 4.4 L4.8 7 M14.2 4.4 L11.2 7 M1.2 9.8 H4.2 M14.8 9.8 H11.8 M2 14.6 L4.8 12.4 M14 14.6 L11.2 12.4" stroke="#c0c0c0" stroke-width="1.5"/><path d="M2.2 1.2 L14.2 14.8" stroke="#191919" stroke-width="2.4"/><path d="M2.8 0.8 L14.8 14.4" stroke="#c0c0c0" stroke-width="1.1"/></svg>
<svg class="r" style="left:1846px;top:1022px;" width="16" height="16" viewBox="0 0 16 16"><ellipse cx="8" cy="4.6" rx="6" ry="3" fill="#c0c0c0"/><path d="M2 7.2 Q8 11.4 14 7.2 V9.6 Q8 13.8 2 9.6 Z M2 11.2 Q8 15.4 14 11.2 V13 Q8 17.2 2 13 Z" fill="#c0c0c0"/><path d="M2.2 1.2 L14.2 14.8" stroke="#191919" stroke-width="2.4"/><path d="M2.8 0.8 L14.8 14.4" stroke="#c0c0c0" stroke-width="1.1"/></svg>
<svg class="r" style="left:1872px;top:1022px;" width="16" height="16" viewBox="0 0 16 16"><path d="M2.4 7 A5.8 5.8 0 0 1 12.6 4.4 M13.6 9.4 A5.8 5.8 0 0 1 3.4 12" fill="none" stroke="#c0c0c0" stroke-width="1.5"/><path d="M13.8 1.8 V5.6 H10 Z M2.2 14.6 V10.8 H6 Z" fill="#c0c0c0"/><path d="M8 4.8 A2.6 2.6 0 0 1 9.4 9.6 V10.6 H6.6 V9.6 A2.6 2.6 0 0 1 8 4.8 Z" fill="#c0c0c0"/><rect x="6.9" y="11.2" width="2.2" height="1" fill="#c0c0c0"/><path d="M2.2 1.2 L14.2 14.8" stroke="#191919" stroke-width="2.4"/><path d="M2.8 0.8 L14.8 14.4" stroke="#c0c0c0" stroke-width="1.1"/></svg>
<svg class="r" style="left:1898px;top:1022px;" width="16" height="16" viewBox="0 0 16 16"><circle cx="8" cy="8" r="6.3" fill="none" stroke="#c4c4c4" stroke-width="1.2"/><path d="M5 8 L7.2 10.4 L11.2 5.8" fill="none" stroke="#c4c4c4" stroke-width="1.3"/></svg>
<div class="r" style="left:0px;top:1040px;width:1920px;height:40px;background:#1b1b1b;"></div>
<svg class="r" style="left:15.7px;top:1052px;" width="17" height="16" viewBox="0 0 17 16"><path d="M0 2.3 L7 1.3 V7.5 H0 Z M8 1.15 L17 0 V7.5 H8 Z M0 8.5 H7 V14.7 L0 13.7 Z M8 8.5 H17 V16 L8 14.85 Z" fill="#ffffff"/></svg>
<div class="r" style="left:48px;top:1040px;width:288px;height:40px;background:#333333;border:1px solid #444;border-bottom:none;"></div>
<svg class="r" style="left:60px;top:1052px;" width="17" height="17" viewBox="0 0 17 17"><circle cx="10.3" cy="6.5" r="5" fill="none" stroke="#e8e8e8" stroke-width="1.3"/><path d="M6.6 10.2 L1 15.8" stroke="#e8e8e8" stroke-width="1.4"/></svg>
<div class="t" style="left:88.50px;top:1052.70px;font-size:14.5px;color:#dcdcdc;letter-spacing:-0.060px;line-height:20px;height:20px;margin-top:-2px;">Escriu aquí per cercar</div>
<svg class="r" style="left:255px;top:1041px" width="81" height="39" viewBox="255 1041 81 39">
<path d="M257 1080 L275 1065 H335 V1080 Z" fill="#e2b98a"/>
<path d="M270 1054 L283 1050 L285 1070 L272 1073 Z" fill="#f4f4ee" stroke="#58a34c" stroke-width="1.2"/>
<path d="M283 1050 L296 1053 L298 1072 L285 1070 Z" fill="#ecece4" stroke="#58a34c" stroke-width="1.2"/>
<path d="M288 1060 L298 1046 L301 1048 L291 1062 Z" fill="#f0b63c"/><path d="M298 1046 L300 1043.5 L302.5 1045.5 L301 1048 Z" fill="#e8635a"/>
<path d="M306 1073 V1056 Q306 1045 315 1045 Q324.5 1045 324.5 1056 V1073 Q315 1076 306 1073 Z" fill="#3f86ea"/>
<path d="M311 1046 Q315 1040 319 1046" fill="none" stroke="#2f6fd0" stroke-width="1.6"/>
<path d="M308.5 1072 V1064 Q315 1057 322 1064 V1072 Q315 1074 308.5 1072 Z" fill="#5b5fe0"/>
<path d="M308.5 1069 Q315 1071.5 322 1069 V1072 Q315 1074 308.5 1072 Z" fill="#c05ad8"/>
</svg>
<svg class="r" style="left:351px;top:1051px;" width="18" height="18" viewBox="0 0 18 18"><circle cx="9" cy="9" r="6.6" fill="none" stroke="#fff" stroke-width="2.1"/></svg>
<svg class="r" style="left:400px;top:1051px;" width="17" height="17" viewBox="0 0 17 17"><rect x="2.5" y="4" width="9" height="9" fill="none" stroke="#fff" stroke-width="1.3"/><path d="M1 1.2 H12.5 M1 15.8 H12.5" stroke="#fff" stroke-width="1.3"/><path d="M15.2 1 V3 M15.2 5.5 V11.5 M15.2 14 V16" stroke="#fff" stroke-width="1.4"/></svg>
<svg class="r" style="left:447px;top:1048px;" width="24" height="24" viewBox="0 0 24 24"><rect x="0.5" y="0.5" width="23" height="23" rx="3.2" fill="#ee7b2a"/><path d="M5 8.2 Q5 4.8 8.4 4.8 Q10.8 4.8 12 6.6 Q13.2 4.8 15.6 4.8 Q19 4.8 19 8.2 Q19 10.2 17.8 11.9 Q19 13.6 19 15.8 Q19 19.2 15.6 19.2 Q13.2 19.2 12 17.4 Q10.8 19.2 8.4 19.2 Q5 19.2 5 15.8 Q5 13.6 6.2 11.9 Q5 10.2 5 8.2 Z" fill="#ffffff"/><circle cx="8.8" cy="8.6" r="1.5" fill="#ee7b2a"/><circle cx="15.2" cy="8.6" r="1.5" fill="#ee7b2a"/><circle cx="8.8" cy="15.4" r="1.5" fill="#ee7b2a"/><circle cx="15.2" cy="15.4" r="1.5" fill="#ee7b2a"/><rect x="8.6" y="11.2" width="6.8" height="1.5" fill="#ee7b2a"/></svg>
<svg class="r" style="left:497px;top:1050px;" width="22" height="19" viewBox="0 0 22 19"><path d="M0.5 2 Q0.5 0.8 1.6 0.8 H8 L10 2.8 H20.4 Q21.5 2.8 21.5 4 V6 H0.5 Z" fill="#e8a712"/><rect x="0.5" y="4.5" width="21" height="13.7" rx="1" fill="#fcd463"/><path d="M5.5 18.2 V12 H16.5 V18.2 H13.5 V14.6 H8.5 V18.2 Z" fill="#3c8fe0"/></svg>
<svg class="r" style="left:545px;top:1048px" width="24" height="24" viewBox="-12 -12 24 24">
<circle r="11.6" fill="#db4437"/>
<path d="M0 0 L-10.05 -5.8 A11.6 11.6 0 0 0 0.01 11.6 L5.1 2.9 Z" fill="#0f9d58"/>
<path d="M0 0 L10.05 -5.8 A11.6 11.6 0 0 1 0 11.6 L5.1 2.9 Z" fill="#ffcd40"/>
<path d="M-10.05 -5.8 A11.6 11.6 0 0 1 10.05 -5.8 L0 -5.8 Z" fill="#db4437"/>
<circle r="5.4" fill="#f1f1f1"/><circle r="4.3" fill="#4285f4"/></svg>
<svg class="r" style="left:594px;top:1048px" width="24" height="24" viewBox="-12 -12 24 24">
<circle r="11.6" fill="#db4437"/>
<path d="M0 0 L-10.05 -5.8 A11.6 11.6 0 0 0 0.01 11.6 L5.1 2.9 Z" fill="#0f9d58"/>
<path d="M0 0 L10.05 -5.8 A11.6 11.6 0 0 1 0 11.6 L5.1 2.9 Z" fill="#ffcd40"/>
<path d="M-10.05 -5.8 A11.6 11.6 0 0 1 10.05 -5.8 L0 -5.8 Z" fill="#db4437"/>
<circle r="5.4" fill="#f1f1f1"/><circle r="4.3" fill="#4285f4"/></svg>
<svg class="r" style="left:692px;top:1048px" width="24" height="24" viewBox="-12 -12 24 24">
<circle r="11.6" fill="#db4437"/>
<path d="M0 0 L-10.05 -5.8 A11.6 11.6 0 0 0 0.01 11.6 L5.1 2.9 Z" fill="#0f9d58"/>
<path d="M0 0 L10.05 -5.8 A11.6 11.6 0 0 1 0 11.6 L5.1 2.9 Z" fill="#ffcd40"/>
<path d="M-10.05 -5.8 A11.6 11.6 0 0 1 10.05 -5.8 L0 -5.8 Z" fill="#db4437"/>
<circle r="5.4" fill="#f1f1f1"/><circle r="4.3" fill="#4285f4"/></svg>
<svg class="r" style="left:605px;top:1060px;" width="16" height="16" viewBox="0 0 16 16"><circle cx="8" cy="8" r="7.4" fill="#101010"/><path d="M4.2 9.4 Q5 5.4 9.6 6.6 Q12.4 7.6 11.6 11.4 Q10.6 14.6 7.6 14.2 Q4.4 13.4 4.2 9.4 Z" fill="#e6c6b6"/><path d="M1.6 6 Q6 -0.6 13.6 4 L12.6 8.2 Q9 4.6 4 8.4 Z" fill="#080808"/><path d="M10.8 12.6 L14.4 9.2 L15.2 11.4 L12.2 14.4 Z" fill="#d8d0d0"/></svg>
<svg class="r" style="left:702px;top:1058.4px;" width="16" height="16" viewBox="0 0 16 16"><circle cx="8" cy="8" r="7.8" fill="#7b1fa2"/></svg>
<div class="t" style="left:560.10px;width:300px;text-align:center;top:1058.40px;font-size:10px;color:#fff;letter-spacing:0.000px;">J</div>
<div class="r" style="left:644px;top:1048px;width:22px;height:22px;background:#0a0a4a;border:1.5px solid #8ec8ff;"></div>
<div class="t" style="left:505.30px;width:300px;text-align:center;top:1052.20px;font-size:11.5px;color:#8ec8ff;letter-spacing:0.000px;font-weight:bold;">Ps</div>
<svg class="r" style="left:741px;top:1048px;" width="24" height="23" viewBox="0 0 24 23"><path d="M17 22.2 L17 16 L3.2 5.4 L0.8 7 L0.8 8.2 Z" fill="#8656c0"/><path d="M17 0.8 L17 7 L3.2 17.6 L0.8 16 L0.8 14.8 Z" fill="#a274d8"/><path d="M17 0.8 L23.2 3.6 V19.4 L17 22.2 Z" fill="#c9a0f4"/></svg>
<div class="r" style="left:778px;top:1040px;width:48px;height:40px;background:#4a4a4a;"></div>
<svg class="r" style="left:790px;top:1048px;" width="24" height="24" viewBox="0 0 24 24"><path d="M12 1.2 L21.6 6.6 L12 12 L2.4 6.6 Z" fill="#9c9c9c"/><path d="M2.4 6.6 L12 12 V23 L2.4 17.6 Z" fill="#383838"/><path d="M21.6 6.6 L12 12 V23 L21.6 17.6 Z" fill="#121212"/><path d="M12 5 L18 8.4 V15.4 L12 18.8 L6 15.4 V8.4 Z" fill="#ffffff"/><path d="M12 5 V9 M6 15.4 L9.4 13.4 M18 15.4 L14.6 13.4" stroke="#222" stroke-width="1.6"/><path d="M12 12 V18.4 M12 12 L6.6 8.8 M12 12 L17.4 8.8" stroke="#1a1a1a" stroke-width="1.5"/><path d="M12 9.2 L14.4 10.6 V13.4 L12 14.8 L9.6 13.4 V10.6 Z" fill="#1a1a1a"/></svg>
<div class="r" style="left:488px;top:1078px;width:40px;height:2px;background:#76b9ed;"></div>
<div class="r" style="left:586px;top:1078px;width:40px;height:2px;background:#76b9ed;"></div>
<div class="r" style="left:635px;top:1078px;width:40px;height:2px;background:#76b9ed;"></div>
<div class="r" style="left:684px;top:1078px;width:40px;height:2px;background:#76b9ed;"></div>
<div class="r" style="left:733px;top:1078px;width:40px;height:2px;background:#76b9ed;"></div>
<div class="r" style="left:778px;top:1078px;width:48px;height:2px;background:#76b9ed;"></div>
<svg class="r" style="left:1500px;top:1046px" width="28" height="26" viewBox="1500 1046 28 26">
<circle cx="1512" cy="1060" r="8.6" fill="#f59a23"/>
<path d="M1502 1056 Q1500.5 1053 1504 1052.5 Q1505 1048.5 1509 1049.5 Q1512 1048 1513.5 1051.5 Q1516 1052 1515 1056 Z" fill="#b8cdea"/>
<path d="M1512 1070 Q1510.5 1066.5 1514 1066 Q1515 1062.5 1519 1063.5 Q1522 1062.5 1523 1065.5 Q1526 1066 1525 1070 Z" fill="#c3d6ee"/>
<circle cx="1519" cy="1053.5" r="4.6" fill="#e03a2f"/></svg>
<div class="t" style="left:1369.00px;width:300px;text-align:center;top:1046.30px;font-size:8px;color:#fff;letter-spacing:0.000px;">1</div>
<div class="t" style="left:1533.70px;top:1051.70px;font-size:14.5px;color:#ffffff;letter-spacing:-1.099px;line-height:20px;height:20px;margin-top:-2px;">16°C</div>
<div class="t" style="left:1571.30px;top:1051.70px;font-size:14.5px;color:#ffffff;letter-spacing:-0.635px;line-height:20px;height:20px;margin-top:-2px;">Parc. soleado</div>
<svg class="r" style="left:1676px;top:1055px;" width="14" height="9" viewBox="0 0 14 9"><path d="M1 8 L7 2 L13 8" fill="none" stroke="#fff" stroke-width="1.4"/></svg>
<svg class="r" style="left:1698px;top:1053px;" width="18" height="12" viewBox="0 0 18 12"><rect x="3.8" y="2.6" width="12" height="7" fill="none" stroke="#fff" stroke-width="1.1"/><rect x="16.2" y="4.6" width="1.2" height="3" fill="#fff"/><rect x="5.2" y="4" width="8" height="4.2" fill="#fff"/><path d="M1.2 0.5 V3 M3.2 0.5 V3 M0.4 3 H4 V5.2 Q2.2 6.6 0.4 5.2 Z M2.2 6 V9" stroke="#fff" stroke-width="0.9" fill="#1b1b1b"/></svg>
<svg class="r" style="left:1725px;top:1053px;" width="14" height="13" viewBox="0 0 14 13"><path d="M1.5 12 A10.5 10.5 0 0 1 12.4 1.4" fill="none" stroke="#9a9a9a" stroke-width="1.2"/><path d="M4.6 12 A7.6 7.6 0 0 1 12.4 4.6" fill="none" stroke="#fff" stroke-width="1.2"/><path d="M7.6 12 A4.6 4.6 0 0 1 12.4 7.6" fill="none" stroke="#fff" stroke-width="1.2"/><circle cx="11.4" cy="11" r="1.4" fill="#fff"/></svg>
<svg class="r" style="left:1746px;top:1052px;" width="18" height="15" viewBox="0 0 18 15"><path d="M0.8 5 H3.6 L7.4 1.4 V13.6 L3.6 10 H0.8 Z" fill="none" stroke="#fff" stroke-width="1.1"/><path d="M9.6 5.2 Q11 7.5 9.6 9.8 M11.8 3.4 Q14.2 7.5 11.8 11.6 M14 1.6 Q17.4 7.5 14 13.4" fill="none" stroke="#fff" stroke-width="1.1"/></svg>
<div class="t" style="left:1774.00px;top:1051.80px;font-size:12px;color:#ffffff;letter-spacing:-0.703px;">CAT</div>
<div class="t" style="left:1821.50px;top:1043.00px;font-size:12px;color:#ffffff;letter-spacing:-0.705px;">13:54</div>
<div class="t" style="left:1806.50px;top:1061.00px;font-size:12px;color:#ffffff;letter-spacing:-0.295px;">10/12/2023</div>
<svg class="r" style="left:1879px;top:1052px;" width="17" height="16" viewBox="0 0 17 16"><path d="M0.5 0.5 H16.5 V12 H10.8 L8.5 15 L6.2 12 H0.5 Z" fill="#fff"/><path d="M3.2 3.6 H13.8 M3.2 6.2 H13.8 M3.2 8.8 H11" stroke="#1b1b1b" stroke-width="1"/></svg>
<div class="r" style="left:1915px;top:1040px;width:1px;height:40px;background:#555;"></div>
<div class="r" style="left:877px;top:73px;width:611px;height:19px;background:#282828;"></div>
<div class="r" style="left:877px;top:73px;width:95px;height:19px;background:#3c3c3c;border-radius:3px 3px 0 0;"></div>
<svg class="r" style="left:885px;top:78px;" width="11" height="10" viewBox="0 0 11 10"><path d="M0.5 1.5 H2 M0.5 5 H2 M0.5 8.5 H2" stroke="#c4c4c4" stroke-width="1.2"/><path d="M3.5 1.5 H10.5 M5 5 H10.5 M5 8.5 H10.5" stroke="#c4c4c4" stroke-width="1.2"/></svg>
<div class="t" style="left:901.00px;top:75.70px;font-size:12.5px;color:#c8c8c8;letter-spacing:0.113px;">Hierarchy</div>
<svg class="r" style="left:1453.0px;top:75.7px;" width="9" height="11" viewBox="0 0 9 11"><rect x="0.6" y="6" width="7.8" height="4" fill="none" stroke="#c4c4c4" stroke-width="1.1"/><path d="M7 6 V3.1 A2.4 2.4 0 0 0 2.2 3.1 V3.4" fill="none" stroke="#c4c4c4" stroke-width="1.1"/></svg>
<svg class="r" style="left:1473.5px;top:76.8px;" width="3" height="11" viewBox="0 0 3 11"><rect x="0.5" y="0" width="2" height="2" fill="#c4c4c4"/><rect x="0.5" y="4.1" width="2" height="2" fill="#c4c4c4"/><rect x="0.5" y="8.2" width="2" height="2" fill="#c4c4c4"/></svg>
<div class="r" style="left:877px;top:92px;width:611px;height:20px;background:#3c3c3c;"></div>
<svg class="r" style="left:883px;top:96px;" width="12" height="12" viewBox="0 0 12 12"><path d="M6 0.5 V11.5 M0.5 6 H11.5" stroke="#d0d0d0" stroke-width="1.5"/></svg>
<svg class="r" style="left:899.5px;top:100px;" width="7" height="4.5" viewBox="0 0 7 4.5"><path d="M0 0 H7 L3.5 4.5 Z" fill="#c4c4c4"/></svg>
<div class="r" style="left:1159.5px;top:94.2px;width:307.5px;height:15.6px;background:#2a2a2a;border:1px solid #1f1f1f;border-top-color:#0e0e0e;border-radius:3px 0 0 3px;"></div>
<div class="r" style="left:1468px;top:94.2px;width:17px;height:15.6px;background:#3c3c3c;border:1px solid #2c2c2c;border-radius:0 3px 3px 0;"></div>
<svg class="r" style="left:1164px;top:98px;" width="10" height="9" viewBox="0 0 10 9"><circle cx="3.4" cy="3.4" r="2.4" fill="none" stroke="#b0b0b0" stroke-width="1.1"/><path d="M5.2 5.2 L7.6 7.8" stroke="#b0b0b0" stroke-width="1.2"/><path d="M7.3 2.4 H10 L8.65 4 Z" fill="#b0b0b0"/></svg>
<div class="t" style="left:1178.00px;top:94.70px;font-size:12px;color:#6e6e6e;letter-spacing:0.221px;">All</div>
<svg class="r" style="left:1469.6px;top:95.5px;" width="14" height="13" viewBox="0 0 14 13"><rect x="2.9" y="0.6" width="9.6" height="9.6" rx="1.2" fill="none" stroke="#c4c4c4" stroke-width="1.1"/><rect x="0.6" y="7.6" width="4.8" height="4.8" fill="#3c3c3c" stroke="#c4c4c4" stroke-width="1.1"/><path d="M5.2 7.8 L10 3 M6.8 2.8 H10.2 V6.2" fill="none" stroke="#c4c4c4" stroke-width="1.1"/></svg>
<div class="r" style="left:877px;top:113px;width:611px;height:518px;background:#383838;"></div>
<div class="r" style="left:877px;top:113px;width:31px;height:518px;background:#303030;"></div>
<div class="r" style="left:877px;top:112px;width:611px;height:16px;background:#2a2a2a;"></div>
<svg class="r" style="left:911.5px;top:117px;" width="9" height="7.5" viewBox="0 0 9 7.5"><path d="M0 0 H9 L4.5 7.5 Z" fill="#808080"/></svg>
<svg class="r" style="left:923.5px;top:113.5px;" width="14" height="14" viewBox="0 0 14 14"><path d="M7 0.6 L12.8 3.9 V10.1 L7 13.4 L1.2 10.1 V3.9 Z" fill="#f4f4f4"/><path d="M7 4.4 L9.4 5.8 V8.4 L7 9.8 L4.6 8.4 V5.8 Z" fill="#2b2b2b"/><path d="M7 0.6 V4.6 M1.2 10.1 L4.8 8.2 M12.8 10.1 L9.2 8.2" stroke="#2b2b2b" stroke-width="1.5"/><path d="M7 7 V13 M7 7 L2 4.2 M7 7 L12 4.2" stroke="#f4f4f4" stroke-width="1.3"/></svg>
<div class="t" style="left:941.50px;top:112.70px;font-size:12.5px;color:#e4e4e4;letter-spacing:0.612px;font-weight:bold;">SampleScene*</div>
<svg class="r" style="left:1474.5px;top:115.8px;" width="3" height="11" viewBox="0 0 3 11"><rect x="0.5" y="0" width="2" height="2" fill="#c4c4c4"/><rect x="0.5" y="4.1" width="2" height="2" fill="#c4c4c4"/><rect x="0.5" y="8.2" width="2" height="2" fill="#c4c4c4"/></svg>
<svg class="r" style="left:937.5px;top:129.0px;" width="14" height="15" viewBox="0 0 14 15"><path d="M7 1 L12.5 4 V11 L7 14 L1.5 11 V4 Z M1.5 4 L7 7 L12.5 4 M7 7 V14" fill="none" stroke="#d2d2d2" stroke-width="1.1" stroke-linejoin="round"/></svg>
<div class="t" style="left:955.00px;top:128.70px;font-size:12.5px;color:#c8c8c8;letter-spacing:0.140px;">Directional Light</div>
<svg class="r" style="left:937.5px;top:145.0px;" width="14" height="15" viewBox="0 0 14 15"><path d="M7 1 L12.5 4 V11 L7 14 L1.5 11 V4 Z M1.5 4 L7 7 L12.5 4 M7 7 V14" fill="none" stroke="#d2d2d2" stroke-width="1.1" stroke-linejoin="round"/></svg>
<div class="t" style="left:955.00px;top:144.70px;font-size:12.5px;color:#c8c8c8;letter-spacing:-0.231px;">AR Session</div>
<svg class="r" style="left:925px;top:165.0px;" width="9" height="7.5" viewBox="0 0 9 7.5"><path d="M0 0 H9 L4.5 7.5 Z" fill="#7e7e7e"/></svg>
<svg class="r" style="left:937.5px;top:161.0px;" width="14" height="15" viewBox="0 0 14 15"><path d="M7 1 L12.5 4 V11 L7 14 L1.5 11 V4 Z M1.5 4 L7 7 L12.5 4 M7 7 V14" fill="none" stroke="#d2d2d2" stroke-width="1.1" stroke-linejoin="round"/></svg>
<div class="t" style="left:955.00px;top:160.70px;font-size:12.5px;color:#c8c8c8;letter-spacing:-0.242px;">XR Origin</div>
<svg class="r" style="left:940px;top:180.0px;" width="7.5" height="9" viewBox="0 0 7.5 9"><path d="M0 0 V9 L7.5 4.5 Z" fill="#7e7e7e"/></svg>
<svg class="r" style="left:951.5px;top:177.0px;" width="14" height="15" viewBox="0 0 14 15"><path d="M7 1 L12.5 4 V11 L7 14 L1.5 11 V4 Z M1.5 4 L7 7 L12.5 4 M7 7 V14" fill="none" stroke="#d2d2d2" stroke-width="1.1" stroke-linejoin="round"/></svg>
<div class="t" style="left:969.00px;top:176.70px;font-size:12.5px;color:#c8c8c8;letter-spacing:0.151px;">Camera Offset</div>
<svg class="r" style="left:925px;top:197.0px;" width="9" height="7.5" viewBox="0 0 9 7.5"><path d="M0 0 H9 L4.5 7.5 Z" fill="#7e7e7e"/></svg>
<svg class="r" style="left:937.5px;top:193.0px;" width="14.0" height="15.0" viewBox="0 0 14 15"><path d="M7 0.5 L13 3.8 V11.2 L7 14.5 L1 11.2 V3.8 Z" fill="#72ccf6"/><path d="M1 3.8 L7 7.2 L13 3.8 M7 7.2 V14.5" fill="none" stroke="#383838" stroke-width="0.90"/></svg>
<div class="r" style="left:910px;top:192.5px;width:2px;height:15px;background:#2c8fd6;"></div>
<svg class="r" style="left:1476px;top:195.5px;" width="7" height="10" viewBox="0 0 7 10"><path d="M1 0.8 L5.6 5 L1 9.2" fill="none" stroke="#9a9a9a" stroke-width="1.3"/></svg>
<div class="t" style="left:955.00px;top:192.70px;font-size:12.5px;color:#7ba3e6;letter-spacing:0.233px;">Jet Turbine</div>
<svg class="r" style="left:939px;top:213.0px;" width="9" height="7.5" viewBox="0 0 9 7.5"><path d="M0 0 H9 L4.5 7.5 Z" fill="#7e7e7e"/></svg>
<svg class="r" style="left:951.5px;top:209.0px;" width="14" height="15" viewBox="0 0 14 15"><path d="M7 1 L12.5 4 V11 L7 14 L1.5 11 V4 Z M1.5 4 L7 7 L12.5 4 M7 7 V14" fill="none" stroke="#d2d2d2" stroke-width="1.1" stroke-linejoin="round"/></svg>
<div class="t" style="left:969.00px;top:208.70px;font-size:12.5px;color:#7ba3e6;letter-spacing:0.101px;">Turbine Root</div>
<svg class="r" style="left:953px;top:229.0px;" width="9" height="7.5" viewBox="0 0 9 7.5"><path d="M0 0 H9 L4.5 7.5 Z" fill="#7e7e7e"/></svg>
<svg class="r" style="left:965.5px;top:225.0px;" width="14" height="15" viewBox="0 0 14 15"><path d="M7 1 L12.5 4 V11 L7 14 L1.5 11 V4 Z M1.5 4 L7 7 L12.5 4 M7 7 V14" fill="none" stroke="#d2d2d2" stroke-width="1.1" stroke-linejoin="round"/></svg>
<div class="t" style="left:983.00px;top:224.70px;font-size:12.5px;color:#7ba3e6;letter-spacing:-0.101px;">Root</div>
<svg class="r" style="left:968px;top:244.0px;" width="7.5" height="9" viewBox="0 0 7.5 9"><path d="M0 0 V9 L7.5 4.5 Z" fill="#7e7e7e"/></svg>
<svg class="r" style="left:979.5px;top:241.0px;" width="14" height="15" viewBox="0 0 14 15"><path d="M7 1 L12.5 4 V11 L7 14 L1.5 11 V4 Z M1.5 4 L7 7 L12.5 4 M7 7 V14" fill="none" stroke="#d2d2d2" stroke-width="1.1" stroke-linejoin="round"/></svg>
<div class="t" style="left:997.00px;top:240.70px;font-size:12.5px;color:#7ba3e6;letter-spacing:0.155px;">Turbine</div>
<svg class="r" style="left:968px;top:260.0px;" width="7.5" height="9" viewBox="0 0 7.5 9"><path d="M0 0 V9 L7.5 4.5 Z" fill="#7e7e7e"/></svg>
<svg class="r" style="left:979.5px;top:257.0px;" width="14" height="15" viewBox="0 0 14 15"><path d="M7 1 L12.5 4 V11 L7 14 L1.5 11 V4 Z M1.5 4 L7 7 L12.5 4 M7 7 V14" fill="none" stroke="#d2d2d2" stroke-width="1.1" stroke-linejoin="round"/></svg>
<div class="t" style="left:997.00px;top:256.70px;font-size:12.5px;color:#7ba3e6;letter-spacing:-0.033px;">Hull</div>
<svg class="r" style="left:968px;top:276.0px;" width="7.5" height="9" viewBox="0 0 7.5 9"><path d="M0 0 V9 L7.5 4.5 Z" fill="#7e7e7e"/></svg>
<svg class="r" style="left:979.5px;top:273.0px;" width="14" height="15" viewBox="0 0 14 15"><path d="M7 1 L12.5 4 V11 L7 14 L1.5 11 V4 Z M1.5 4 L7 7 L12.5 4 M7 7 V14" fill="none" stroke="#d2d2d2" stroke-width="1.1" stroke-linejoin="round"/></svg>
<div class="t" style="left:997.00px;top:272.70px;font-size:12.5px;color:#7ba3e6;letter-spacing:-0.113px;">Flaps</div>
<svg class="r" style="left:968px;top:292.0px;" width="7.5" height="9" viewBox="0 0 7.5 9"><path d="M0 0 V9 L7.5 4.5 Z" fill="#7e7e7e"/></svg>
<svg class="r" style="left:979.5px;top:289.0px;" width="14" height="15" viewBox="0 0 14 15"><path d="M7 1 L12.5 4 V11 L7 14 L1.5 11 V4 Z M1.5 4 L7 7 L12.5 4 M7 7 V14" fill="none" stroke="#d2d2d2" stroke-width="1.1" stroke-linejoin="round"/></svg>
<div class="t" style="left:997.00px;top:288.70px;font-size:12.5px;color:#7ba3e6;letter-spacing:-0.153px;">Fins</div>
<svg class="r" style="left:968px;top:308.0px;" width="7.5" height="9" viewBox="0 0 7.5 9"><path d="M0 0 V9 L7.5 4.5 Z" fill="#7e7e7e"/></svg>
<svg class="r" style="left:979.5px;top:305.0px;" width="14" height="15" viewBox="0 0 14 15"><path d="M7 1 L12.5 4 V11 L7 14 L1.5 11 V4 Z M1.5 4 L7 7 L12.5 4 M7 7 V14" fill="none" stroke="#d2d2d2" stroke-width="1.1" stroke-linejoin="round"/></svg>
<div class="t" style="left:997.00px;top:304.70px;font-size:12.5px;color:#7ba3e6;letter-spacing:0.095px;">Containers</div>
<svg class="r" style="left:968px;top:324.0px;" width="7.5" height="9" viewBox="0 0 7.5 9"><path d="M0 0 V9 L7.5 4.5 Z" fill="#7e7e7e"/></svg>
<svg class="r" style="left:979.5px;top:321.0px;" width="14" height="15" viewBox="0 0 14 15"><path d="M7 1 L12.5 4 V11 L7 14 L1.5 11 V4 Z M1.5 4 L7 7 L12.5 4 M7 7 V14" fill="none" stroke="#d2d2d2" stroke-width="1.1" stroke-linejoin="round"/></svg>
<div class="t" style="left:997.00px;top:320.70px;font-size:12.5px;color:#7ba3e6;letter-spacing:0.205px;">Tubes</div>
<svg class="r" style="left:968px;top:340.0px;" width="7.5" height="9" viewBox="0 0 7.5 9"><path d="M0 0 V9 L7.5 4.5 Z" fill="#7e7e7e"/></svg>
<svg class="r" style="left:979.5px;top:337.0px;" width="14" height="15" viewBox="0 0 14 15"><path d="M7 1 L12.5 4 V11 L7 14 L1.5 11 V4 Z M1.5 4 L7 7 L12.5 4 M7 7 V14" fill="none" stroke="#d2d2d2" stroke-width="1.1" stroke-linejoin="round"/></svg>
<div class="t" style="left:997.00px;top:336.70px;font-size:12.5px;color:#7ba3e6;letter-spacing:0.115px;">Electronics</div>
<svg class="r" style="left:968px;top:356.0px;" width="7.5" height="9" viewBox="0 0 7.5 9"><path d="M0 0 V9 L7.5 4.5 Z" fill="#7e7e7e"/></svg>
<svg class="r" style="left:979.5px;top:353.0px;" width="14" height="15" viewBox="0 0 14 15"><path d="M7 1 L12.5 4 V11 L7 14 L1.5 11 V4 Z M1.5 4 L7 7 L12.5 4 M7 7 V14" fill="none" stroke="#d2d2d2" stroke-width="1.1" stroke-linejoin="round"/></svg>
<div class="t" style="left:997.00px;top:352.70px;font-size:12.5px;color:#7ba3e6;letter-spacing:-0.104px;">Pipe</div>
<div class="r" style="left:877px;top:368.5px;width:611px;height:16px;background:#4d4d4d;"></div>
<svg class="r" style="left:879px;top:372.0px;" width="13" height="9" viewBox="0 0 13 9"><path d="M0.6 4.5 Q6.5 -1.6 12.4 4.5 Q6.5 10.6 0.6 4.5 Z" fill="none" stroke="#6e6e6e" stroke-width="1.1"/><circle cx="6.5" cy="4.5" r="2" fill="#6e6e6e"/></svg>
<svg class="r" style="left:895px;top:370.5px;" width="12" height="12" viewBox="0 0 12 12"><path d="M1.2 1.4 L3.4 0.8 L5.6 5 L8 4.2 L11 6 L10.4 10.6 L5.6 11.4 L3 8.4 L2.2 6.4 L3.8 6 Z" fill="#6e6e6e"/></svg>
<svg class="r" style="left:968px;top:372.0px;" width="7.5" height="9" viewBox="0 0 7.5 9"><path d="M0 0 V9 L7.5 4.5 Z" fill="#7e7e7e"/></svg>
<svg class="r" style="left:979.5px;top:369.0px;" width="14" height="15" viewBox="0 0 14 15"><path d="M7 1 L12.5 4 V11 L7 14 L1.5 11 V4 Z M1.5 4 L7 7 L12.5 4 M7 7 V14" fill="none" stroke="#d2d2d2" stroke-width="1.1" stroke-linejoin="round"/></svg>
<div class="t" style="left:997.00px;top:368.70px;font-size:12.5px;color:#c8c8c8;letter-spacing:0.059px;">Pistons</div>
<svg class="r" style="left:968px;top:388.0px;" width="7.5" height="9" viewBox="0 0 7.5 9"><path d="M0 0 V9 L7.5 4.5 Z" fill="#7e7e7e"/></svg>
<svg class="r" style="left:979.5px;top:385.0px;" width="14" height="15" viewBox="0 0 14 15"><path d="M7 1 L12.5 4 V11 L7 14 L1.5 11 V4 Z M1.5 4 L7 7 L12.5 4 M7 7 V14" fill="none" stroke="#d2d2d2" stroke-width="1.1" stroke-linejoin="round"/></svg>
<div class="t" style="left:997.00px;top:384.70px;font-size:12.5px;color:#7ba3e6;letter-spacing:-0.000px;">Name Plate</div>
<svg class="r" style="left:968px;top:404.0px;" width="7.5" height="9" viewBox="0 0 7.5 9"><path d="M0 0 V9 L7.5 4.5 Z" fill="#7e7e7e"/></svg>
<svg class="r" style="left:979.5px;top:401.0px;" width="14" height="15" viewBox="0 0 14 15"><path d="M7 1 L12.5 4 V11 L7 14 L1.5 11 V4 Z M1.5 4 L7 7 L12.5 4 M7 7 V14" fill="none" stroke="#d2d2d2" stroke-width="1.1" stroke-linejoin="round"/></svg>
<div class="t" style="left:997.00px;top:400.70px;font-size:12.5px;color:#7ba3e6;letter-spacing:0.042px;">Bolts</div>
<svg class="r" style="left:968px;top:420.0px;" width="7.5" height="9" viewBox="0 0 7.5 9"><path d="M0 0 V9 L7.5 4.5 Z" fill="#7e7e7e"/></svg>
<svg class="r" style="left:979.5px;top:417.0px;" width="14" height="15" viewBox="0 0 14 15"><path d="M7 1 L12.5 4 V11 L7 14 L1.5 11 V4 Z M1.5 4 L7 7 L12.5 4 M7 7 V14" fill="none" stroke="#d2d2d2" stroke-width="1.1" stroke-linejoin="round"/></svg>
<div class="t" style="left:997.00px;top:416.70px;font-size:12.5px;color:#7ba3e6;letter-spacing:-0.078px;">Grid</div>
<svg class="r" style="left:968px;top:436.0px;" width="7.5" height="9" viewBox="0 0 7.5 9"><path d="M0 0 V9 L7.5 4.5 Z" fill="#7e7e7e"/></svg>
<svg class="r" style="left:979.5px;top:433.0px;" width="14" height="15" viewBox="0 0 14 15"><path d="M7 1 L12.5 4 V11 L7 14 L1.5 11 V4 Z M1.5 4 L7 7 L12.5 4 M7 7 V14" fill="none" stroke="#d2d2d2" stroke-width="1.1" stroke-linejoin="round"/></svg>
<div class="t" style="left:997.00px;top:432.70px;font-size:12.5px;color:#7ba3e6;letter-spacing:-0.113px;">Flaps</div>
<svg class="r" style="left:968px;top:452.0px;" width="7.5" height="9" viewBox="0 0 7.5 9"><path d="M0 0 V9 L7.5 4.5 Z" fill="#7e7e7e"/></svg>
<svg class="r" style="left:979.5px;top:449.0px;" width="14" height="15" viewBox="0 0 14 15"><path d="M7 1 L12.5 4 V11 L7 14 L1.5 11 V4 Z M1.5 4 L7 7 L12.5 4 M7 7 V14" fill="none" stroke="#d2d2d2" stroke-width="1.1" stroke-linejoin="round"/></svg>
<div class="t" style="left:997.00px;top:448.70px;font-size:12.5px;color:#7ba3e6;letter-spacing:-0.023px;">Plates</div>
<svg class="r" style="left:968px;top:468.0px;" width="7.5" height="9" viewBox="0 0 7.5 9"><path d="M0 0 V9 L7.5 4.5 Z" fill="#7e7e7e"/></svg>
<svg class="r" style="left:979.5px;top:465.0px;" width="14" height="15" viewBox="0 0 14 15"><path d="M7 1 L12.5 4 V11 L7 14 L1.5 11 V4 Z M1.5 4 L7 7 L12.5 4 M7 7 V14" fill="none" stroke="#d2d2d2" stroke-width="1.1" stroke-linejoin="round"/></svg>
<div class="t" style="left:997.00px;top:464.70px;font-size:12.5px;color:#7ba3e6;letter-spacing:0.005px;">Clamps</div>
<svg class="r" style="left:925px;top:485.0px;" width="9" height="7.5" viewBox="0 0 9 7.5"><path d="M0 0 H9 L4.5 7.5 Z" fill="#7e7e7e"/></svg>
<svg class="r" style="left:937.5px;top:481.0px;" width="14" height="15" viewBox="0 0 14 15"><path d="M7 1 L12.5 4 V11 L7 14 L1.5 11 V4 Z M1.5 4 L7 7 L12.5 4 M7 7 V14" fill="none" stroke="#d2d2d2" stroke-width="1.1" stroke-linejoin="round"/></svg>
<div class="t" style="left:955.00px;top:480.70px;font-size:12.5px;color:#c8c8c8;letter-spacing:-0.063px;">Canvas</div>
<svg class="r" style="left:940px;top:500.0px;" width="7.5" height="9" viewBox="0 0 7.5 9"><path d="M0 0 V9 L7.5 4.5 Z" fill="#7e7e7e"/></svg>
<svg class="r" style="left:951.5px;top:497.0px;" width="14" height="15" viewBox="0 0 14 15"><path d="M7 1 L12.5 4 V11 L7 14 L1.5 11 V4 Z M1.5 4 L7 7 L12.5 4 M7 7 V14" fill="none" stroke="#d2d2d2" stroke-width="1.1" stroke-linejoin="round"/></svg>
<div class="t" style="left:969.00px;top:496.70px;font-size:12.5px;color:#c8c8c8;letter-spacing:0.017px;">Hull</div>
<svg class="r" style="left:940px;top:516.0px;" width="7.5" height="9" viewBox="0 0 7.5 9"><path d="M0 0 V9 L7.5 4.5 Z" fill="#7e7e7e"/></svg>
<svg class="r" style="left:951.5px;top:513.0px;" width="14" height="15" viewBox="0 0 14 15"><path d="M7 1 L12.5 4 V11 L7 14 L1.5 11 V4 Z M1.5 4 L7 7 L12.5 4 M7 7 V14" fill="none" stroke="#d2d2d2" stroke-width="1.1" stroke-linejoin="round"/></svg>
<div class="t" style="left:969.00px;top:512.70px;font-size:12.5px;color:#c8c8c8;letter-spacing:0.145px;">Tubes</div>
<svg class="r" style="left:940px;top:532.0px;" width="7.5" height="9" viewBox="0 0 7.5 9"><path d="M0 0 V9 L7.5 4.5 Z" fill="#7e7e7e"/></svg>
<svg class="r" style="left:951.5px;top:529.0px;" width="14" height="15" viewBox="0 0 14 15"><path d="M7 1 L12.5 4 V11 L7 14 L1.5 11 V4 Z M1.5 4 L7 7 L12.5 4 M7 7 V14" fill="none" stroke="#d2d2d2" stroke-width="1.1" stroke-linejoin="round"/></svg>
<div class="t" style="left:969.00px;top:528.70px;font-size:12.5px;color:#c8c8c8;letter-spacing:-0.153px;">Grid</div>
<svg class="r" style="left:939px;top:549.0px;" width="9" height="7.5" viewBox="0 0 9 7.5"><path d="M0 0 H9 L4.5 7.5 Z" fill="#7e7e7e"/></svg>
<svg class="r" style="left:951.5px;top:545.0px;" width="14" height="15" viewBox="0 0 14 15"><path d="M7 1 L12.5 4 V11 L7 14 L1.5 11 V4 Z M1.5 4 L7 7 L12.5 4 M7 7 V14" fill="none" stroke="#d2d2d2" stroke-width="1.1" stroke-linejoin="round"/></svg>
<div class="t" style="left:969.00px;top:544.70px;font-size:12.5px;color:#c8c8c8;letter-spacing:0.044px;">Pistons</div>
<svg class="r" style="left:965.5px;top:561.0px;" width="14" height="15" viewBox="0 0 14 15"><path d="M7 1 L12.5 4 V11 L7 14 L1.5 11 V4 Z M1.5 4 L7 7 L12.5 4 M7 7 V14" fill="none" stroke="#d2d2d2" stroke-width="1.1" stroke-linejoin="round"/></svg>
<div class="t" style="left:983.00px;top:560.70px;font-size:12.5px;color:#c8c8c8;letter-spacing:0.189px;">Text (TMP)</div>
<svg class="r" style="left:937.5px;top:577.0px;" width="14" height="15" viewBox="0 0 14 15"><path d="M7 1 L12.5 4 V11 L7 14 L1.5 11 V4 Z M1.5 4 L7 7 L12.5 4 M7 7 V14" fill="none" stroke="#d2d2d2" stroke-width="1.1" stroke-linejoin="round"/></svg>
<div class="t" style="left:955.00px;top:576.70px;font-size:12.5px;color:#c8c8c8;letter-spacing:0.069px;">EventSystem</div>
<div class="r" style="left:1490px;top:73px;width:430px;height:19px;background:#282828;"></div>
<div class="r" style="left:1490px;top:73px;width:95px;height:19px;background:#3c3c3c;border-radius:3px 3px 0 0;"></div>
<div class="r" style="left:1490px;top:72.5px;width:95px;height:2px;background:#3a79bb;border-radius:2px 2px 0 0;"></div>
<svg class="r" style="left:1497.5px;top:77.5px;" width="10" height="10" viewBox="0 0 10 10"><circle cx="5" cy="5" r="4.8" fill="#d0d0d0"/><rect x="4.2" y="4.2" width="1.7" height="3.6" fill="#3c3c3c"/><rect x="4.2" y="1.8" width="1.7" height="1.6" fill="#3c3c3c"/></svg>
<div class="t" style="left:1514.00px;top:75.70px;font-size:12.5px;color:#c8c8c8;letter-spacing:0.232px;">Inspector</div>
<svg class="r" style="left:1884.0px;top:75.7px;" width="9" height="11" viewBox="0 0 9 11"><rect x="0.6" y="6" width="7.8" height="4" fill="none" stroke="#c4c4c4" stroke-width="1.1"/><path d="M7 6 V3.1 A2.4 2.4 0 0 0 2.2 3.1 V3.4" fill="none" stroke="#c4c4c4" stroke-width="1.1"/></svg>
<svg class="r" style="left:1904.5px;top:76.8px;" width="3" height="11" viewBox="0 0 3 11"><rect x="0.5" y="0" width="2" height="2" fill="#c4c4c4"/><rect x="0.5" y="4.1" width="2" height="2" fill="#c4c4c4"/><rect x="0.5" y="8.2" width="2" height="2" fill="#c4c4c4"/></svg>
<div class="r" style="left:1490px;top:92px;width:430px;height:926px;background:#383838;"></div>
<div class="r" style="left:1490px;top:92px;width:430px;height:59px;background:#3c3c3c;"></div>
<svg class="r" style="left:1497px;top:101.5px;" width="21.0" height="22.5" viewBox="0 0 14 15"><path d="M7 0.5 L13 3.8 V11.2 L7 14.5 L1 11.2 V3.8 Z" fill="#72ccf6"/><path d="M1 3.8 L7 7.2 L13 3.8 M7 7.2 V14.5" fill="none" stroke="#3c3c3c" stroke-width="0.73"/></svg>
<svg class="r" style="left:1516px;top:122.5px;" width="7" height="4.5" viewBox="0 0 7 4.5"><path d="M0 0 H7 L3.5 4.5 Z" fill="#c4c4c4"/></svg>
<div class="r" style="left:1538px;top:103px;width:14px;height:14px;background:#2a2a2a;border:1px solid #1f1f1f;border-radius:2.5px;"></div>
<svg class="r" style="left:1540px;top:105px;" width="10" height="10" viewBox="0 0 10 10"><path d="M1.4 5.2 L4 7.8 L8.8 2.2" fill="none" stroke="#e4e4e4" stroke-width="1.5"/></svg>
<div class="r" style="left:1558px;top:101.5px;width:280px;height:17.5px;background:#2a2a2a;border:1px solid #1f1f1f;border-radius:3px;"></div>
<div class="t" style="left:1561.00px;top:102.70px;font-size:12.5px;color:#e0e0e0;letter-spacing:0.265px;font-weight:bold;">Pistons</div>
<div class="r" style="left:1842px;top:103px;width:14px;height:14px;background:#2a2a2a;border:1px solid #1f1f1f;border-radius:2.5px;"></div>
<div class="t" style="left:1860.00px;top:102.70px;font-size:12.5px;color:#c8c8c8;letter-spacing:0.206px;">Static</div>
<svg class="r" style="left:1905.5px;top:108.5px;" width="7" height="4.5" viewBox="0 0 7 4.5"><path d="M0 0 H7 L3.5 4.5 Z" fill="#c4c4c4"/></svg>
<div class="t" style="left:1530.00px;top:126.20px;font-size:12.5px;color:#c8c8c8;letter-spacing:0.616px;">Tag</div>
<div class="r" style="left:1558px;top:125.7px;width:158px;height:16.3px;background:#515151;border:1px solid #474747;border-bottom-color:#2e2e2e;border-radius:3px;"></div>
<div class="t" style="left:1561.00px;top:126.20px;font-size:12.5px;color:#e0e0e0;letter-spacing:0.224px;">Untagged</div>
<svg class="r" style="left:1703px;top:132px;" width="7" height="4.5" viewBox="0 0 7 4.5"><path d="M0 0 H7 L3.5 4.5 Z" fill="#c4c4c4"/></svg>
<div class="t" style="left:1729.00px;top:126.20px;font-size:12.5px;color:#c8c8c8;letter-spacing:0.147px;">Layer</div>
<div class="r" style="left:1768.5px;top:125.7px;width:147px;height:16.3px;background:#515151;border:1px solid #474747;border-bottom-color:#2e2e2e;border-radius:3px;"></div>
<div class="t" style="left:1772.00px;top:126.20px;font-size:12.5px;color:#e0e0e0;letter-spacing:0.199px;">Default</div>
<svg class="r" style="left:1902px;top:132px;" width="7" height="4.5" viewBox="0 0 7 4.5"><path d="M0 0 H7 L3.5 4.5 Z" fill="#c4c4c4"/></svg>
<div class="r" style="left:1490px;top:150.5px;width:430px;height:1px;background:#1a1a1a;"></div>
<div class="r" style="left:1490px;top:151.5px;width:430px;height:21.5px;background:#3e3e3e;"></div>
<svg class="r" style="left:1496px;top:158.5px;" width="9" height="7.5" viewBox="0 0 9 7.5"><path d="M0 0 H9 L4.5 7.5 Z" fill="#7e7e7e"/></svg>
<svg class="r" style="left:1511px;top:155px;" width="14" height="14" viewBox="0 0 14 14"><path d="M7 6.6 V1.8" stroke="#c4f04a" stroke-width="2" stroke-linecap="round"/><path d="M5.6 8.8 L1.8 11" stroke="#62c4f8" stroke-width="2" stroke-linecap="round"/><path d="M8.4 8.8 L12.2 11" stroke="#f06a3c" stroke-width="2" stroke-linecap="round"/></svg>
<div class="t" style="left:1550.00px;top:154.70px;font-size:13px;color:#e0e0e0;letter-spacing:0.214px;font-weight:bold;">Transform</div>
<svg class="r" style="left:1860px;top:156.5px;" width="11" height="11" viewBox="0 0 11 11"><circle cx="5.5" cy="5.5" r="5.3" fill="#d0d0d0"/></svg>
<div class="t" style="left:1715.60px;width:300px;text-align:center;top:154.50px;font-size:9.5px;color:#3c3c3c;letter-spacing:0.000px;font-weight:bold;">?</div>
<svg class="r" style="left:1881px;top:157px;" width="12" height="10" viewBox="0 0 12 10"><path d="M0.5 2.5 H11.5 M0.5 7.5 H11.5" stroke="#d0d0d0" stroke-width="1.2"/><path d="M8 0.3 V4.7 M4 5.3 V9.7" stroke="#d0d0d0" stroke-width="1.4"/></svg>
<svg class="r" style="left:1905.0px;top:156.8px;" width="3" height="11" viewBox="0 0 3 11"><rect x="0.5" y="0" width="2" height="2" fill="#c4c4c4"/><rect x="0.5" y="4.1" width="2" height="2" fill="#c4c4c4"/><rect x="0.5" y="8.2" width="2" height="2" fill="#c4c4c4"/></svg>
<div class="r" style="left:1490px;top:173px;width:430px;height:1px;background:#303030;"></div>
<div class="t" style="left:1509.00px;top:178.70px;font-size:12.5px;color:#c8c8c8;letter-spacing:0.000px;">Position</div>
<div class="t" style="left:1664.00px;top:178.70px;font-size:12.5px;color:#c8c8c8;letter-spacing:0.000px;">X</div>
<div class="r" style="left:1680px;top:177.5px;width:64.5px;height:17px;background:#2a2a2a;border:1px solid #1f1f1f;border-radius:3px;"></div>
<div class="t" style="left:1683.50px;top:178.70px;font-size:12.5px;color:#d8d8d8;letter-spacing:0.000px;">0</div>
<div class="t" style="left:1750.00px;top:178.70px;font-size:12.5px;color:#c8c8c8;letter-spacing:0.000px;">Y</div>
<div class="r" style="left:1765.5px;top:177.5px;width:64.0px;height:17px;background:#2a2a2a;border:1px solid #1f1f1f;border-radius:3px;"></div>
<div class="t" style="left:1769.00px;top:178.70px;font-size:12.5px;color:#d8d8d8;letter-spacing:0.000px;">0</div>
<div class="t" style="left:1835.00px;top:178.70px;font-size:12.5px;color:#c8c8c8;letter-spacing:0.000px;">Z</div>
<div class="r" style="left:1851px;top:177.5px;width:64.5px;height:17px;background:#2a2a2a;border:1px solid #1f1f1f;border-radius:3px;"></div>
<div class="t" style="left:1854.50px;top:178.70px;font-size:12.5px;color:#d8d8d8;letter-spacing:0.000px;">0</div>
<div class="t" style="left:1509.00px;top:198.70px;font-size:12.5px;color:#c8c8c8;letter-spacing:0.000px;">Rotation</div>
<div class="t" style="left:1664.00px;top:198.70px;font-size:12.5px;color:#c8c8c8;letter-spacing:0.000px;">X</div>
<div class="r" style="left:1680px;top:197.5px;width:64.5px;height:17px;background:#2a2a2a;border:1px solid #1f1f1f;border-radius:3px;"></div>
<div class="t" style="left:1683.50px;top:198.70px;font-size:12.5px;color:#d8d8d8;letter-spacing:0.000px;">0</div>
<div class="t" style="left:1750.00px;top:198.70px;font-size:12.5px;color:#c8c8c8;letter-spacing:0.000px;">Y</div>
<div class="r" style="left:1765.5px;top:197.5px;width:64.0px;height:17px;background:#2a2a2a;border:1px solid #1f1f1f;border-radius:3px;"></div>
<div class="t" style="left:1769.00px;top:198.70px;font-size:12.5px;color:#d8d8d8;letter-spacing:0.000px;">0</div>
<div class="t" style="left:1835.00px;top:198.70px;font-size:12.5px;color:#c8c8c8;letter-spacing:0.000px;">Z</div>
<div class="r" style="left:1851px;top:197.5px;width:64.5px;height:17px;background:#2a2a2a;border:1px solid #1f1f1f;border-radius:3px;"></div>
<div class="t" style="left:1854.50px;top:198.70px;font-size:12.5px;color:#d8d8d8;letter-spacing:0.000px;">0</div>
<div class="t" style="left:1509.00px;top:218.70px;font-size:12.5px;color:#c8c8c8;letter-spacing:0.000px;">Scale</div>
<div class="t" style="left:1664.00px;top:218.70px;font-size:12.5px;color:#c8c8c8;letter-spacing:0.000px;">X</div>
<div class="r" style="left:1680px;top:217.5px;width:64.5px;height:17px;background:#2a2a2a;border:1px solid #1f1f1f;border-radius:3px;"></div>
<div class="t" style="left:1683.50px;top:218.70px;font-size:12.5px;color:#d8d8d8;letter-spacing:0.000px;">1</div>
<div class="t" style="left:1750.00px;top:218.70px;font-size:12.5px;color:#c8c8c8;letter-spacing:0.000px;">Y</div>
<div class="r" style="left:1765.5px;top:217.5px;width:64.0px;height:17px;background:#2a2a2a;border:1px solid #1f1f1f;border-radius:3px;"></div>
<div class="t" style="left:1769.00px;top:218.70px;font-size:12.5px;color:#d8d8d8;letter-spacing:0.000px;">1</div>
<div class="t" style="left:1835.00px;top:218.70px;font-size:12.5px;color:#c8c8c8;letter-spacing:0.000px;">Z</div>
<div class="r" style="left:1851px;top:217.5px;width:64.5px;height:17px;background:#2a2a2a;border:1px solid #1f1f1f;border-radius:3px;"></div>
<div class="t" style="left:1854.50px;top:218.70px;font-size:12.5px;color:#d8d8d8;letter-spacing:0.000px;">1</div>
<svg class="r" style="left:1641px;top:221px;" width="14" height="10" viewBox="0 0 14 10"><path d="M5.2 2.4 H4 A2.6 2.6 0 0 0 4 7.6 H5.2 M8.8 2.4 H10 A2.6 2.6 0 0 1 10 7.6 H8.8" fill="none" stroke="#c4c4c4" stroke-width="1.2"/><path d="M2.2 0.6 L11.8 9.4" stroke="#c4c4c4" stroke-width="1.1"/></svg>
<div class="r" style="left:1490px;top:243.5px;width:430px;height:1px;background:#1a1a1a;"></div>
<div class="r" style="left:1490px;top:244.5px;width:430px;height:21.5px;background:#3e3e3e;"></div>
<div class="r" style="left:1490px;top:245.5px;width:2px;height:65px;background:#2c8fd6;"></div>
<svg class="r" style="left:1496px;top:251.5px;" width="9" height="7.5" viewBox="0 0 9 7.5"><path d="M0 0 H9 L4.5 7.5 Z" fill="#7e7e7e"/></svg>
<svg class="r" style="left:1511px;top:247px;" width="16" height="17" viewBox="0 0 16 17"><path d="M1.5 0.8 H8.6 L12.2 4.4 V14.6 H1.5 Z" fill="#f0f0f0"/><path d="M8.6 0.8 V4.4 H12.2 Z" fill="#b8b8b8"/><path d="M4 5.4 V10 M6.2 5.4 V10 M3 6.8 H7.4 M3 8.6 H7.4" stroke="#2f8f3c" stroke-width="0.9"/><circle cx="10.6" cy="12" r="4.2" fill="#1fb24a" stroke="#0c6e28" stroke-width="0.8"/><path d="M10.6 9.8 V14.2 M8.4 12 H12.8" stroke="#fff" stroke-width="1.2"/></svg>
<div class="r" style="left:1530.5px;top:248.5px;width:14px;height:14px;background:#2a2a2a;border:1px solid #1f1f1f;border-radius:2.5px;"></div>
<svg class="r" style="left:1532.5px;top:250.5px;" width="10" height="10" viewBox="0 0 10 10"><path d="M1.4 5.2 L4 7.8 L8.8 2.2" fill="none" stroke="#e4e4e4" stroke-width="1.5"/></svg>
<div class="t" style="left:1550.00px;top:247.50px;font-size:13px;color:#e0e0e0;letter-spacing:0.374px;font-weight:bold;">Mesh Toggler (Script)</div>
<svg class="r" style="left:1860px;top:249.8px;" width="11" height="11" viewBox="0 0 11 11"><circle cx="5.5" cy="5.5" r="5.3" fill="#d0d0d0"/></svg>
<div class="t" style="left:1715.60px;width:300px;text-align:center;top:247.80px;font-size:9.5px;color:#3c3c3c;letter-spacing:0.000px;font-weight:bold;">?</div>
<svg class="r" style="left:1881px;top:250.3px;" width="12" height="10" viewBox="0 0 12 10"><path d="M0.5 2.5 H11.5 M0.5 7.5 H11.5" stroke="#d0d0d0" stroke-width="1.2"/><path d="M8 0.3 V4.7 M4 5.3 V9.7" stroke="#d0d0d0" stroke-width="1.4"/></svg>
<svg class="r" style="left:1905.0px;top:250.10000000000002px;" width="3" height="11" viewBox="0 0 3 11"><rect x="0.5" y="0" width="2" height="2" fill="#c4c4c4"/><rect x="0.5" y="4.1" width="2" height="2" fill="#c4c4c4"/><rect x="0.5" y="8.2" width="2" height="2" fill="#c4c4c4"/></svg>
<div class="r" style="left:1490px;top:266px;width:430px;height:1px;background:#303030;"></div>
<div class="t" style="left:1509.00px;top:270.60px;font-size:12.5px;color:#8a8a8a;letter-spacing:0.425px;">Script</div>
<div class="r" style="left:1665px;top:270px;width:250px;height:16.5px;background:#565656;border:1px solid #2a2a2a;border-radius:3px;"></div>
<svg class="r" style="left:1668px;top:272px;" width="10" height="12" viewBox="0 0 10 12"><path d="M0.8 0.6 H6 L9 3.6 V11.4 H0.8 Z" fill="#8c8c8c"/><path d="M3 4.5 V9 M5 4.5 V9 M2 5.8 H6 M2 7.6 H6" stroke="#6a6a6a" stroke-width="0.8"/></svg>
<div class="t" style="left:1681.00px;top:270.60px;font-size:12.5px;color:#858585;letter-spacing:0.495px;">MeshToggler</div>
<svg class="r" style="left:1900px;top:272.5px;" width="11" height="11" viewBox="0 0 11 11"><circle cx="5.5" cy="5.5" r="4.6" fill="none" stroke="#7a7a7a" stroke-width="1"/><circle cx="5.5" cy="5.5" r="1.6" fill="#7a7a7a"/></svg>
<div class="t" style="left:1509.00px;top:290.70px;font-size:12.5px;color:#e0e0e0;letter-spacing:-0.066px;font-weight:bold;">Object</div>
<div class="r" style="left:1665px;top:290px;width:250px;height:16.5px;background:#959595;border:1px solid #2a2a2a;border-radius:3px;"></div>
<div class="r" style="left:1897.5px;top:291px;width:16.5px;height:14.5px;background:#7e7e7e;border-radius:0 2px 2px 0;"></div>
<svg class="r" style="left:1667.5px;top:292.5px;" width="10.92" height="11.700000000000001" viewBox="0 0 14 15"><path d="M7 0.5 L13 3.8 V11.2 L7 14.5 L1 11.2 V3.8 Z" fill="#72ccf6"/><path d="M1 3.8 L7 7.2 L13 3.8 M7 7.2 V14.5" fill="none" stroke="#959595" stroke-width="1.02"/></svg>
<div class="t" style="left:1681.00px;top:290.70px;font-size:12.5px;color:#f2f2f2;letter-spacing:-0.306px;font-weight:bold;">Pistons</div>
<svg class="r" style="left:1900px;top:292.8px;" width="11" height="11" viewBox="0 0 11 11"><circle cx="5.5" cy="5.5" r="4.6" fill="none" stroke="#e0e0e0" stroke-width="1"/><circle cx="5.5" cy="5.5" r="1.6" fill="#e0e0e0"/></svg>
<div class="r" style="left:1490px;top:315px;width:430px;height:1px;background:#1a1a1a;"></div>
<div class="r" style="left:1590.5px;top:325px;width:229px;height:21.5px;background:#585858;border:1px solid #303030;border-radius:3px;"></div>
<div class="t" style="left:1555.00px;width:300px;text-align:center;top:328.00px;font-size:12.5px;color:#e6e6e6;letter-spacing:0.300px;">Add Component</div>
<div class="r" style="left:875px;top:634px;width:613px;height:19px;background:#282828;"></div>
<div class="r" style="left:875px;top:634px;width:81px;height:19px;background:#3c3c3c;border-radius:3px 3px 0 0;"></div>
<svg class="r" style="left:884px;top:638px;" width="12" height="10.5" viewBox="0 0 13 11"><path d="M0.3 1.4 Q0.3 0.4 1.3 0.4 H4.6 L6 1.9 H11.7 Q12.7 1.9 12.7 2.9 V9.6 Q12.7 10.6 11.7 10.6 H1.3 Q0.3 10.6 0.3 9.6 Z" fill="#c4c4c4"/></svg>
<div class="t" style="left:899.00px;top:636.70px;font-size:12.5px;color:#c8c8c8;letter-spacing:0.157px;">Project</div>
<svg class="r" style="left:1453.0px;top:636.7px;" width="9" height="11" viewBox="0 0 9 11"><rect x="0.6" y="6" width="7.8" height="4" fill="none" stroke="#c4c4c4" stroke-width="1.1"/><path d="M7 6 V3.1 A2.4 2.4 0 0 0 2.2 3.1 V3.4" fill="none" stroke="#c4c4c4" stroke-width="1.1"/></svg>
<svg class="r" style="left:1473.5px;top:637.8px;" width="3" height="11" viewBox="0 0 3 11"><rect x="0.5" y="0" width="2" height="2" fill="#c4c4c4"/><rect x="0.5" y="4.1" width="2" height="2" fill="#c4c4c4"/><rect x="0.5" y="8.2" width="2" height="2" fill="#c4c4c4"/></svg>
<div class="r" style="left:875px;top:653px;width:613px;height:21px;background:#3c3c3c;"></div>
<svg class="r" style="left:882px;top:657px;" width="12" height="12" viewBox="0 0 12 12"><path d="M6 0.5 V11.5 M0.5 6 H11.5" stroke="#d0d0d0" stroke-width="1.5"/></svg>
<svg class="r" style="left:898.5px;top:661px;" width="7" height="4.5" viewBox="0 0 7 4.5"><path d="M0 0 H7 L3.5 4.5 Z" fill="#c4c4c4"/></svg>
<div class="r" style="left:1022px;top:656px;width:300px;height:14.5px;background:#2a2a2a;border:1px solid #1f1f1f;border-radius:3px 0 0 3px;"></div>
<div class="r" style="left:1323px;top:656px;width:17px;height:14.5px;background:#3c3c3c;border:1px solid #2c2c2c;border-radius:0 3px 3px 0;"></div>
<svg class="r" style="left:1026.5px;top:659.5px;" width="8" height="8" viewBox="0 0 8 8"><circle cx="3" cy="3" r="2.2" fill="none" stroke="#b0b0b0" stroke-width="1.1"/><path d="M4.6 4.6 L7 7.2" stroke="#b0b0b0" stroke-width="1.2"/></svg>
<svg class="r" style="left:1324.6px;top:656.8px;" width="14" height="13" viewBox="0 0 14 13"><rect x="2.9" y="0.6" width="9.6" height="9.6" rx="1.2" fill="none" stroke="#c4c4c4" stroke-width="1.1"/><rect x="0.6" y="7.6" width="4.8" height="4.8" fill="#3c3c3c" stroke="#c4c4c4" stroke-width="1.1"/><path d="M5.2 7.8 L10 3 M6.8 2.8 H10.2 V6.2" fill="none" stroke="#c4c4c4" stroke-width="1.1"/></svg>
<div class="r" style="left:1343px;top:653px;width:1px;height:21px;background:#303030;"></div>
<div class="r" style="left:1367.5px;top:653px;width:1px;height:21px;background:#303030;"></div>
<div class="r" style="left:1393.5px;top:653px;width:1px;height:21px;background:#303030;"></div>
<div class="r" style="left:1419.5px;top:653px;width:1px;height:21px;background:#303030;"></div>
<div class="r" style="left:1445.5px;top:653px;width:1px;height:21px;background:#303030;"></div>
<svg class="r" style="left:1348.5px;top:655.5px;" width="13" height="13" viewBox="0 0 13 13"><circle cx="4.2" cy="9.4" r="3.4" fill="#c4c4c4"/><rect x="2" y="0.6" width="5.6" height="5.2" fill="#c4c4c4"/><path d="M9.6 2.6 L12.6 8.6 H6.8 Z" fill="#c4c4c4"/></svg>
<svg class="r" style="left:1374.5px;top:656.5px;" width="12" height="11" viewBox="0 0 12 11"><path d="M5 0.6 H11 V6 L5.6 10.6 L0.8 5.6 Z" fill="#c4c4c4"/><circle cx="8.6" cy="3" r="1.1" fill="#3c3c3c"/></svg>
<svg class="r" style="left:1400px;top:655.6px;" width="13" height="13" viewBox="0 0 13 13"><circle cx="6.5" cy="6.5" r="6.2" fill="#c4c4c4"/><rect x="5.6" y="2.8" width="1.9" height="5" fill="#3c3c3c"/><rect x="5.6" y="8.8" width="1.9" height="1.9" fill="#3c3c3c"/></svg>
<svg class="r" style="left:1427px;top:656px;" width="12" height="12" viewBox="0 0 12 12"><path d="M6 0.5 L7.6 4.4 L11.8 4.7 L8.6 7.4 L9.6 11.5 L6 9.3 L2.4 11.5 L3.4 7.4 L0.2 4.7 L4.4 4.4 Z" fill="#8c8c8c"/></svg>
<svg class="r" style="left:1452px;top:656.8px;" width="16" height="11" viewBox="0 0 16 11"><path d="M1 5.5 Q7.5 -1 14 5.5 Q7.5 12 1 5.5 Z" fill="none" stroke="#c4c4c4" stroke-width="1.2"/><path d="M2.2 11 L12.8 0" stroke="#c4c4c4" stroke-width="1.3"/></svg>
<div class="t" style="left:1468.50px;top:655.20px;font-size:12.5px;color:#b4b4b4;letter-spacing:0.549px;">20</div>
<div class="r" style="left:875px;top:673px;width:613px;height:1px;background:#2a2a2a;"></div>
<div class="r" style="left:875px;top:674px;width:282px;height:344px;background:#383838;"></div>
<div class="r" style="left:875px;top:674px;width:282px;height:344px;overflow:hidden;">
<svg class="r" style="left:4.5px;top:4.5px;" width="9" height="7.5" viewBox="0 0 9 7.5"><path d="M0 0 H9 L4.5 7.5 Z" fill="#7e7e7e"/></svg>
<svg class="r" style="left:17.5px;top:2.5px;" width="15" height="11" viewBox="0 0 15 11"><path d="M0.3 1.4 Q0.3 0.4 1.3 0.4 H4.6 L6 1.9 H11 Q12 1.9 12 2.9 V3.6 H3.6 L0.3 9 Z" fill="#c2c2c2"/><path d="M3.4 4.4 H14.6 L11.8 10.6 H0.6 Z" fill="#c2c2c2"/></svg>
<div class="t" style="left:35.00px;top:-0.30px;font-size:12.5px;color:#dcdcdc;letter-spacing:0.251px;font-weight:bold;">Assets</div>
<svg class="r" style="left:19px;top:19.5px;" width="7.5" height="9" viewBox="0 0 7.5 9"><path d="M0 0 V9 L7.5 4.5 Z" fill="#7e7e7e"/></svg>
<svg class="r" style="left:32px;top:18.5px;" width="13" height="11" viewBox="0 0 13 11"><path d="M0.3 1.4 Q0.3 0.4 1.3 0.4 H4.6 L6 1.9 H11.7 Q12.7 1.9 12.7 2.9 V9.6 Q12.7 10.6 11.7 10.6 H1.3 Q0.3 10.6 0.3 9.6 Z" fill="#c2c2c2"/></svg>
<div class="t" style="left:48.00px;top:15.70px;font-size:12.5px;color:#c8c8c8;letter-spacing:0.081px;">Assets</div>
<svg class="r" style="left:32px;top:34.5px;" width="13" height="11" viewBox="0 0 13 11"><path d="M0.8 1.7 Q0.8 0.9 1.6 0.9 H4.4 L5.8 2.4 H11.4 Q12.2 2.4 12.2 3.2 V9.3 Q12.2 10.1 11.4 10.1 H1.6 Q0.8 10.1 0.8 9.3 Z" fill="none" stroke="#c2c2c2" stroke-width="1.1"/></svg>
<div class="t" style="left:48.00px;top:31.70px;font-size:12.5px;color:#c8c8c8;letter-spacing:0.122px;">Materials</div>
<svg class="r" style="left:32px;top:50.5px;" width="13" height="11" viewBox="0 0 13 11"><path d="M0.8 1.7 Q0.8 0.9 1.6 0.9 H4.4 L5.8 2.4 H11.4 Q12.2 2.4 12.2 3.2 V9.3 Q12.2 10.1 11.4 10.1 H1.6 Q0.8 10.1 0.8 9.3 Z" fill="none" stroke="#c2c2c2" stroke-width="1.1"/></svg>
<div class="t" style="left:48.00px;top:47.70px;font-size:12.5px;color:#c8c8c8;letter-spacing:0.089px;">Prefabs</div>
<svg class="r" style="left:32px;top:66.5px;" width="13" height="11" viewBox="0 0 13 11"><path d="M0.3 1.4 Q0.3 0.4 1.3 0.4 H4.6 L6 1.9 H11.7 Q12.7 1.9 12.7 2.9 V9.6 Q12.7 10.6 11.7 10.6 H1.3 Q0.3 10.6 0.3 9.6 Z" fill="#c2c2c2"/></svg>
<div class="t" style="left:48.00px;top:63.70px;font-size:12.5px;color:#c8c8c8;letter-spacing:-0.032px;">Scenes</div>
<div class="r" style="left:0px;top:80px;width:282px;height:16px;background:#4d4d4d;"></div>
<svg class="r" style="left:32px;top:82.5px;" width="13" height="11" viewBox="0 0 13 11"><path d="M0.3 1.4 Q0.3 0.4 1.3 0.4 H4.6 L6 1.9 H11.7 Q12.7 1.9 12.7 2.9 V9.6 Q12.7 10.6 11.7 10.6 H1.3 Q0.3 10.6 0.3 9.6 Z" fill="#c2c2c2"/></svg>
<div class="t" style="left:48.00px;top:79.70px;font-size:12.5px;color:#c8c8c8;letter-spacing:0.186px;">Scripts</div>
<svg class="r" style="left:19px;top:99.5px;" width="7.5" height="9" viewBox="0 0 7.5 9"><path d="M0 0 V9 L7.5 4.5 Z" fill="#7e7e7e"/></svg>
<svg class="r" style="left:32px;top:98.5px;" width="13" height="11" viewBox="0 0 13 11"><path d="M0.3 1.4 Q0.3 0.4 1.3 0.4 H4.6 L6 1.9 H11.7 Q12.7 1.9 12.7 2.9 V9.6 Q12.7 10.6 11.7 10.6 H1.3 Q0.3 10.6 0.3 9.6 Z" fill="#c2c2c2"/></svg>
<div class="t" style="left:48.00px;top:95.70px;font-size:12.5px;color:#c8c8c8;letter-spacing:0.216px;">TextMesh Pro</div>
<svg class="r" style="left:19px;top:115.5px;" width="7.5" height="9" viewBox="0 0 7.5 9"><path d="M0 0 V9 L7.5 4.5 Z" fill="#7e7e7e"/></svg>
<svg class="r" style="left:32px;top:114.5px;" width="13" height="11" viewBox="0 0 13 11"><path d="M0.3 1.4 Q0.3 0.4 1.3 0.4 H4.6 L6 1.9 H11.7 Q12.7 1.9 12.7 2.9 V9.6 Q12.7 10.6 11.7 10.6 H1.3 Q0.3 10.6 0.3 9.6 Z" fill="#c2c2c2"/></svg>
<div class="t" style="left:48.00px;top:111.70px;font-size:12.5px;color:#c8c8c8;letter-spacing:-1.033px;">XR</div>
<svg class="r" style="left:4.5px;top:132.5px;" width="9" height="7.5" viewBox="0 0 9 7.5"><path d="M0 0 H9 L4.5 7.5 Z" fill="#7e7e7e"/></svg>
<svg class="r" style="left:17.5px;top:130.5px;" width="15" height="11" viewBox="0 0 15 11"><path d="M0.3 1.4 Q0.3 0.4 1.3 0.4 H4.6 L6 1.9 H11 Q12 1.9 12 2.9 V3.6 H3.6 L0.3 9 Z" fill="#c2c2c2"/><path d="M3.4 4.4 H14.6 L11.8 10.6 H0.6 Z" fill="#c2c2c2"/></svg>
<div class="t" style="left:35.00px;top:127.70px;font-size:12.5px;color:#dcdcdc;letter-spacing:0.415px;font-weight:bold;">Packages</div>
<svg class="r" style="left:19px;top:147.5px;" width="7.5" height="9" viewBox="0 0 7.5 9"><path d="M0 0 V9 L7.5 4.5 Z" fill="#7e7e7e"/></svg>
<svg class="r" style="left:32px;top:146.5px;" width="13" height="11" viewBox="0 0 13 11"><path d="M0.3 1.4 Q0.3 0.4 1.3 0.4 H4.6 L6 1.9 H11.7 Q12.7 1.9 12.7 2.9 V9.6 Q12.7 10.6 11.7 10.6 H1.3 Q0.3 10.6 0.3 9.6 Z" fill="#c2c2c2"/></svg>
<div class="t" style="left:48.00px;top:143.70px;font-size:12.5px;color:#c8c8c8;letter-spacing:-0.045px;">AR Foundation</div>
<svg class="r" style="left:19px;top:163.5px;" width="7.5" height="9" viewBox="0 0 7.5 9"><path d="M0 0 V9 L7.5 4.5 Z" fill="#7e7e7e"/></svg>
<svg class="r" style="left:32px;top:162.5px;" width="13" height="11" viewBox="0 0 13 11"><path d="M0.3 1.4 Q0.3 0.4 1.3 0.4 H4.6 L6 1.9 H11.7 Q12.7 1.9 12.7 2.9 V9.6 Q12.7 10.6 11.7 10.6 H1.3 Q0.3 10.6 0.3 9.6 Z" fill="#c2c2c2"/></svg>
<div class="t" style="left:48.00px;top:159.70px;font-size:12.5px;color:#c8c8c8;letter-spacing:0.081px;">Code Coverage</div>
<svg class="r" style="left:19px;top:179.5px;" width="7.5" height="9" viewBox="0 0 7.5 9"><path d="M0 0 V9 L7.5 4.5 Z" fill="#7e7e7e"/></svg>
<svg class="r" style="left:32px;top:178.5px;" width="13" height="11" viewBox="0 0 13 11"><path d="M0.3 1.4 Q0.3 0.4 1.3 0.4 H4.6 L6 1.9 H11.7 Q12.7 1.9 12.7 2.9 V9.6 Q12.7 10.6 11.7 10.6 H1.3 Q0.3 10.6 0.3 9.6 Z" fill="#c2c2c2"/></svg>
<div class="t" style="left:48.00px;top:175.70px;font-size:12.5px;color:#c8c8c8;letter-spacing:0.101px;">Custom NUnit</div>
<svg class="r" style="left:19px;top:195.5px;" width="7.5" height="9" viewBox="0 0 7.5 9"><path d="M0 0 V9 L7.5 4.5 Z" fill="#7e7e7e"/></svg>
<svg class="r" style="left:32px;top:194.5px;" width="13" height="11" viewBox="0 0 13 11"><path d="M0.3 1.4 Q0.3 0.4 1.3 0.4 H4.6 L6 1.9 H11.7 Q12.7 1.9 12.7 2.9 V9.6 Q12.7 10.6 11.7 10.6 H1.3 Q0.3 10.6 0.3 9.6 Z" fill="#c2c2c2"/></svg>
<div class="t" style="left:48.00px;top:191.70px;font-size:12.5px;color:#c8c8c8;letter-spacing:0.119px;">Editor Coroutines</div>
<svg class="r" style="left:19px;top:211.5px;" width="7.5" height="9" viewBox="0 0 7.5 9"><path d="M0 0 V9 L7.5 4.5 Z" fill="#7e7e7e"/></svg>
<svg class="r" style="left:32px;top:210.5px;" width="13" height="11" viewBox="0 0 13 11"><path d="M0.3 1.4 Q0.3 0.4 1.3 0.4 H4.6 L6 1.9 H11.7 Q12.7 1.9 12.7 2.9 V9.6 Q12.7 10.6 11.7 10.6 H1.3 Q0.3 10.6 0.3 9.6 Z" fill="#c2c2c2"/></svg>
<div class="t" style="left:48.00px;top:207.70px;font-size:12.5px;color:#c8c8c8;letter-spacing:-0.135px;">Google ARCore XR Plugin</div>
<svg class="r" style="left:19px;top:227.5px;" width="7.5" height="9" viewBox="0 0 7.5 9"><path d="M0 0 V9 L7.5 4.5 Z" fill="#7e7e7e"/></svg>
<svg class="r" style="left:32px;top:226.5px;" width="13" height="11" viewBox="0 0 13 11"><path d="M0.3 1.4 Q0.3 0.4 1.3 0.4 H4.6 L6 1.9 H11.7 Q12.7 1.9 12.7 2.9 V9.6 Q12.7 10.6 11.7 10.6 H1.3 Q0.3 10.6 0.3 9.6 Z" fill="#c2c2c2"/></svg>
<div class="t" style="left:48.00px;top:223.70px;font-size:12.5px;color:#c8c8c8;letter-spacing:0.121px;">Input System</div>
<svg class="r" style="left:19px;top:243.5px;" width="7.5" height="9" viewBox="0 0 7.5 9"><path d="M0 0 V9 L7.5 4.5 Z" fill="#7e7e7e"/></svg>
<svg class="r" style="left:32px;top:242.5px;" width="13" height="11" viewBox="0 0 13 11"><path d="M0.3 1.4 Q0.3 0.4 1.3 0.4 H4.6 L6 1.9 H11.7 Q12.7 1.9 12.7 2.9 V9.6 Q12.7 10.6 11.7 10.6 H1.3 Q0.3 10.6 0.3 9.6 Z" fill="#c2c2c2"/></svg>
<div class="t" style="left:48.00px;top:239.70px;font-size:12.5px;color:#c8c8c8;letter-spacing:0.042px;">JetBrains Rider Editor</div>
<svg class="r" style="left:19px;top:259.5px;" width="7.5" height="9" viewBox="0 0 7.5 9"><path d="M0 0 V9 L7.5 4.5 Z" fill="#7e7e7e"/></svg>
<svg class="r" style="left:32px;top:258.5px;" width="13" height="11" viewBox="0 0 13 11"><path d="M0.3 1.4 Q0.3 0.4 1.3 0.4 H4.6 L6 1.9 H11.7 Q12.7 1.9 12.7 2.9 V9.6 Q12.7 10.6 11.7 10.6 H1.3 Q0.3 10.6 0.3 9.6 Z" fill="#c2c2c2"/></svg>
<div class="t" style="left:48.00px;top:255.70px;font-size:12.5px;color:#c8c8c8;letter-spacing:0.195px;">Mathematics</div>
<svg class="r" style="left:19px;top:275.5px;" width="7.5" height="9" viewBox="0 0 7.5 9"><path d="M0 0 V9 L7.5 4.5 Z" fill="#7e7e7e"/></svg>
<svg class="r" style="left:32px;top:274.5px;" width="13" height="11" viewBox="0 0 13 11"><path d="M0.3 1.4 Q0.3 0.4 1.3 0.4 H4.6 L6 1.9 H11.7 Q12.7 1.9 12.7 2.9 V9.6 Q12.7 10.6 11.7 10.6 H1.3 Q0.3 10.6 0.3 9.6 Z" fill="#c2c2c2"/></svg>
<div class="t" style="left:48.00px;top:271.70px;font-size:12.5px;color:#c8c8c8;letter-spacing:0.135px;">Profile Analyzer</div>
<svg class="r" style="left:19px;top:291.5px;" width="7.5" height="9" viewBox="0 0 7.5 9"><path d="M0 0 V9 L7.5 4.5 Z" fill="#7e7e7e"/></svg>
<svg class="r" style="left:32px;top:290.5px;" width="13" height="11" viewBox="0 0 13 11"><path d="M0.3 1.4 Q0.3 0.4 1.3 0.4 H4.6 L6 1.9 H11.7 Q12.7 1.9 12.7 2.9 V9.6 Q12.7 10.6 11.7 10.6 H1.3 Q0.3 10.6 0.3 9.6 Z" fill="#c2c2c2"/></svg>
<div class="t" style="left:48.00px;top:287.70px;font-size:12.5px;color:#c8c8c8;letter-spacing:0.127px;">Settings Manager</div>
<svg class="r" style="left:19px;top:307.5px;" width="7.5" height="9" viewBox="0 0 7.5 9"><path d="M0 0 V9 L7.5 4.5 Z" fill="#7e7e7e"/></svg>
<svg class="r" style="left:32px;top:306.5px;" width="13" height="11" viewBox="0 0 13 11"><path d="M0.3 1.4 Q0.3 0.4 1.3 0.4 H4.6 L6 1.9 H11.7 Q12.7 1.9 12.7 2.9 V9.6 Q12.7 10.6 11.7 10.6 H1.3 Q0.3 10.6 0.3 9.6 Z" fill="#c2c2c2"/></svg>
<div class="t" style="left:48.00px;top:303.70px;font-size:12.5px;color:#c8c8c8;letter-spacing:0.222px;">Test Framework</div>
<svg class="r" style="left:19px;top:323.5px;" width="7.5" height="9" viewBox="0 0 7.5 9"><path d="M0 0 V9 L7.5 4.5 Z" fill="#7e7e7e"/></svg>
<svg class="r" style="left:32px;top:322.5px;" width="13" height="11" viewBox="0 0 13 11"><path d="M0.3 1.4 Q0.3 0.4 1.3 0.4 H4.6 L6 1.9 H11.7 Q12.7 1.9 12.7 2.9 V9.6 Q12.7 10.6 11.7 10.6 H1.3 Q0.3 10.6 0.3 9.6 Z" fill="#c2c2c2"/></svg>
<div class="t" style="left:48.00px;top:319.70px;font-size:12.5px;color:#c8c8c8;letter-spacing:0.251px;">TextMeshPro</div>
<svg class="r" style="left:19px;top:339.5px;" width="7.5" height="9" viewBox="0 0 7.5 9"><path d="M0 0 V9 L7.5 4.5 Z" fill="#7e7e7e"/></svg>
<svg class="r" style="left:32px;top:338.5px;" width="13" height="11" viewBox="0 0 13 11"><path d="M0.3 1.4 Q0.3 0.4 1.3 0.4 H4.6 L6 1.9 H11.7 Q12.7 1.9 12.7 2.9 V9.6 Q12.7 10.6 11.7 10.6 H1.3 Q0.3 10.6 0.3 9.6 Z" fill="#c2c2c2"/></svg>
<div class="t" style="left:48.00px;top:335.70px;font-size:12.5px;color:#c8c8c8;letter-spacing:0.104px;">Timeline</div>
</div>
<div class="r" style="left:1157px;top:674px;width:13px;height:344px;background:#353535;"></div>
<svg class="r" style="left:1159.5px;top:679px;" width="8" height="5" viewBox="0 0 8 5"><path d="M0 5 H8 L4.0 0 Z" fill="#c0c0c0"/></svg>
<svg class="r" style="left:1159.5px;top:1007px;" width="8" height="5" viewBox="0 0 8 5"><path d="M0 0 H8 L4.0 5 Z" fill="#c0c0c0"/></svg>
<div class="r" style="left:1159px;top:733px;width:9.5px;height:202px;background:#5f5f5f;border-radius:5px;"></div>
<div class="r" style="left:1170px;top:674px;width:1px;height:344px;background:#232323;"></div>
<div class="r" style="left:1171px;top:674px;width:317px;height:344px;background:#333333;"></div>
<div class="r" style="left:1171px;top:674px;width:317px;height:20.5px;background:#3e3e3e;"></div>
<div class="t" style="left:1175.00px;top:675.70px;font-size:12.5px;color:#c8c8c8;letter-spacing:0.081px;">Assets</div>
<svg class="r" style="left:1220px;top:679.5px;" width="6" height="9" viewBox="0 0 6 9"><path d="M1 0.8 L5 4.5 L1 8.2" fill="none" stroke="#b0b0b0" stroke-width="1.2"/></svg>
<div class="t" style="left:1231.50px;top:675.70px;font-size:12.5px;color:#dcdcdc;letter-spacing:0.446px;font-weight:bold;">Scripts</div>
<svg class="r" style="left:1188px;top:696.5px;" width="13" height="14" viewBox="0 0 13 14"><path d="M0.6 0.6 H9 L12.4 4 V13.4 H0.6 Z" fill="#f2f2f2"/><path d="M9 0.6 V4 H12.4 Z" fill="#b4b4b4"/><path d="M4.6 4.6 L4 11 M7.8 4.6 L7.2 11 M2.6 6.6 H9.6 M2.4 9 H9.4" stroke="#2f8f3c" stroke-width="1.1"/></svg>
<svg class="r" style="left:1188px;top:712.5px;" width="13" height="14" viewBox="0 0 13 14"><path d="M0.6 0.6 H9 L12.4 4 V13.4 H0.6 Z" fill="#f2f2f2"/><path d="M9 0.6 V4 H12.4 Z" fill="#b4b4b4"/><path d="M4.6 4.6 L4 11 M7.8 4.6 L7.2 11 M2.6 6.6 H9.6 M2.4 9 H9.4" stroke="#2f8f3c" stroke-width="1.1"/></svg>
<div class="t" style="left:1205.00px;top:695.50px;font-size:12.5px;color:#c8c8c8;letter-spacing:0.858px;">MeshToggler</div>
<div class="t" style="left:1205.00px;top:711.50px;font-size:12.5px;color:#c8c8c8;letter-spacing:0.626px;">RotationController</div>
<div class="r" style="left:1171px;top:997px;width:317px;height:21px;background:#414141;"></div>
<div class="r" style="left:1422px;top:1006.5px;width:50px;height:1.5px;background:#5e5e5e;"></div>
<div class="r" style="left:1416.5px;top:1002px;width:10.5px;height:10.5px;background:#999;border-radius:50%;"></div>
<svg class="r" style="left:1040px;top:280px" width="640" height="110" viewBox="1040 280 640 110">
<path d="M1055 374 L1636 302.2" stroke="#ffffff" stroke-width="2"/>
<path d="M1653 300.2 L1634.2 296.6 L1635.6 308 Z" fill="#ffffff"/>
</svg>
</div></body></html>
